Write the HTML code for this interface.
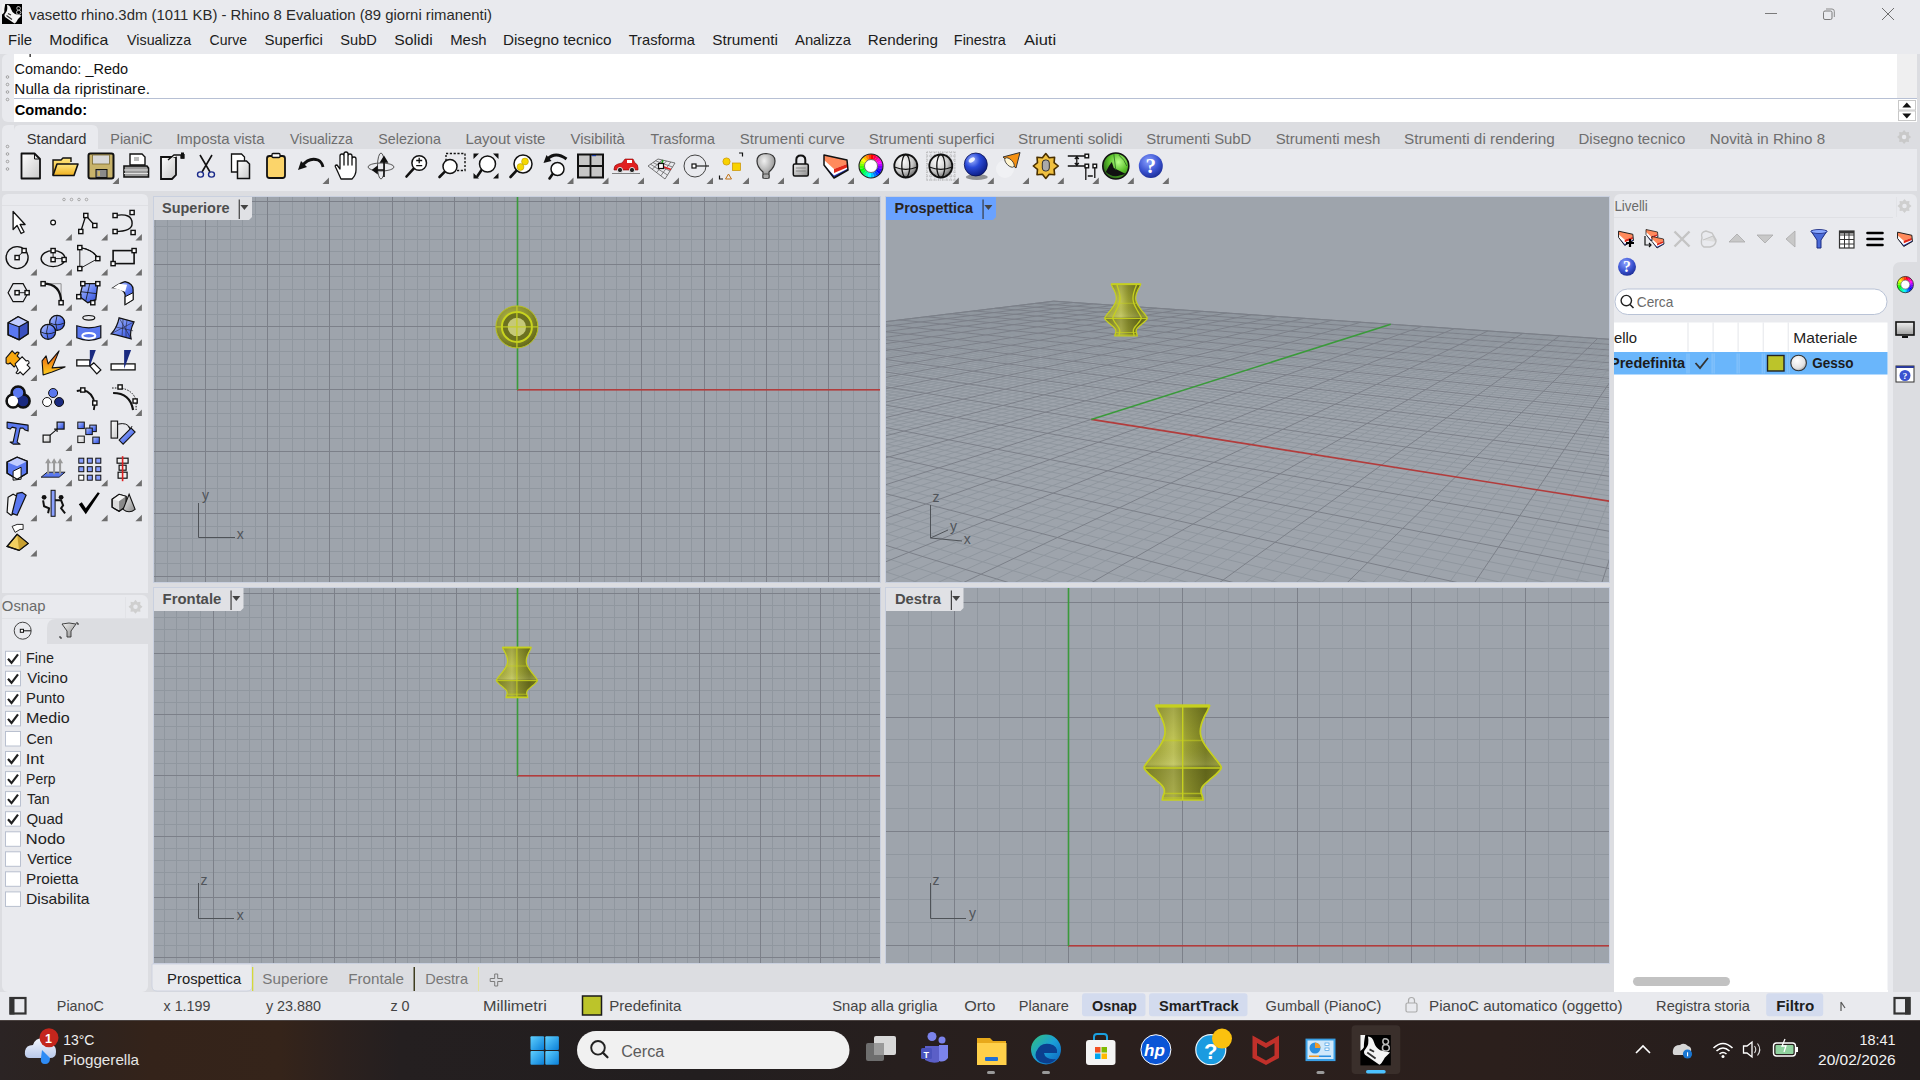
<!DOCTYPE html>
<html><head><meta charset="utf-8"><title>Rhino 8</title>
<style>html,body{margin:0;padding:0;width:1920px;height:1080px;overflow:hidden;background:#dcdde1}
svg{display:block;font-family:"Liberation Sans",sans-serif}</style></head>
<body><svg width="1920" height="1080" viewBox="0 0 1920 1080">
<defs><clipPath id="vp1"><rect x="154" y="197" width="726" height="385"/></clipPath><clipPath id="vp3"><rect x="154" y="588" width="726" height="375"/></clipPath><clipPath id="vp4"><rect x="886" y="588" width="723" height="375"/></clipPath><clipPath id="vp2"><rect x="886" y="197" width="723" height="385"/></clipPath><linearGradient id="vg0" x1="0" x2="1" y1="0" y2="0"><stop offset="0" stop-color="#969b2c"/><stop offset="0.2" stop-color="#aaae3e"/><stop offset="0.38" stop-color="#bfc356"/><stop offset="0.55" stop-color="#9a9f32"/><stop offset="0.8" stop-color="#777c20"/><stop offset="1" stop-color="#8e9328"/></linearGradient><linearGradient id="vg0v" x1="0" x2="0" y1="0" y2="1"><stop offset="0" stop-color="#000" stop-opacity="0.15"/><stop offset="0.35" stop-color="#000" stop-opacity="0"/><stop offset="0.62" stop-color="#fff" stop-opacity="0.12"/><stop offset="0.66" stop-color="#000" stop-opacity="0.2"/><stop offset="1" stop-color="#000" stop-opacity="0.1"/></linearGradient><linearGradient id="vg1" x1="0" x2="1" y1="0" y2="0"><stop offset="0" stop-color="#969b2c"/><stop offset="0.2" stop-color="#aaae3e"/><stop offset="0.38" stop-color="#bfc356"/><stop offset="0.55" stop-color="#9a9f32"/><stop offset="0.8" stop-color="#777c20"/><stop offset="1" stop-color="#8e9328"/></linearGradient><linearGradient id="vg1v" x1="0" x2="0" y1="0" y2="1"><stop offset="0" stop-color="#000" stop-opacity="0.15"/><stop offset="0.35" stop-color="#000" stop-opacity="0"/><stop offset="0.62" stop-color="#fff" stop-opacity="0.12"/><stop offset="0.66" stop-color="#000" stop-opacity="0.2"/><stop offset="1" stop-color="#000" stop-opacity="0.1"/></linearGradient><linearGradient id="vg2" x1="0" x2="1" y1="0" y2="0"><stop offset="0" stop-color="#969b2c"/><stop offset="0.2" stop-color="#aaae3e"/><stop offset="0.38" stop-color="#bfc356"/><stop offset="0.55" stop-color="#9a9f32"/><stop offset="0.8" stop-color="#777c20"/><stop offset="1" stop-color="#8e9328"/></linearGradient><linearGradient id="vg2v" x1="0" x2="0" y1="0" y2="1"><stop offset="0" stop-color="#000" stop-opacity="0.15"/><stop offset="0.35" stop-color="#000" stop-opacity="0"/><stop offset="0.62" stop-color="#fff" stop-opacity="0.12"/><stop offset="0.66" stop-color="#000" stop-opacity="0.2"/><stop offset="1" stop-color="#000" stop-opacity="0.1"/></linearGradient><clipPath id="livclip"><rect x="1614" y="300" width="274" height="100"/></clipPath><linearGradient id="tbg" x1="0" x2="1" y1="0" y2="0"><stop offset="0.0000" stop-color="#2b2424"/><stop offset="0.0312" stop-color="#2c2320"/><stop offset="0.0781" stop-color="#34231a"/><stop offset="0.1458" stop-color="#35241a"/><stop offset="0.1771" stop-color="#2c211e"/><stop offset="0.2083" stop-color="#241f20"/><stop offset="0.3646" stop-color="#221e1f"/><stop offset="0.4688" stop-color="#271f1e"/><stop offset="0.5729" stop-color="#2a1f1d"/><stop offset="0.7812" stop-color="#2b1f1c"/><stop offset="1.0000" stop-color="#231d1d"/></linearGradient><linearGradient id="cloud" x1="0" x2="0" y1="0" y2="1"><stop offset="0" stop-color="#f4f7ff"/><stop offset="1" stop-color="#b9c9ea"/></linearGradient><linearGradient id="win" x1="0" x2="1" y1="0" y2="1"><stop offset="0" stop-color="#5fd0ff"/><stop offset="1" stop-color="#0a7fd8"/></linearGradient><linearGradient id="edg" x1="0" x2="1" y1="0" y2="1"><stop offset="0" stop-color="#33c37a"/><stop offset="0.5" stop-color="#1a9fd8"/><stop offset="1" stop-color="#0c5fbd"/></linearGradient><linearGradient id="gMon" x1="0" x2="0" y1="0" y2="1"><stop offset="0" stop-color="#f0f0f0"/><stop offset="1" stop-color="#a0a0a0"/></linearGradient><linearGradient id="gWhite" x1="0" x2="1" y1="0" y2="1"><stop offset="0" stop-color="#ffffff"/><stop offset="1" stop-color="#c9c9c9"/></linearGradient><linearGradient id="gYellow" x1="0" x2="0" y1="0" y2="1"><stop offset="0" stop-color="#ffe780"/><stop offset="1" stop-color="#f0b020"/></linearGradient><linearGradient id="gBlue" x1="0" x2="1" y1="0" y2="1"><stop offset="0" stop-color="#b9c8ff"/><stop offset="0.6" stop-color="#5a78f0"/><stop offset="1" stop-color="#3048c8"/></linearGradient><linearGradient id="gGray" x1="0" x2="1" y1="0" y2="1"><stop offset="0" stop-color="#f4f4f4"/><stop offset="1" stop-color="#8a8a8a"/></linearGradient><radialGradient id="gSphere" cx="0.35" cy="0.3" r="0.75"><stop offset="0" stop-color="#ffffff"/><stop offset="0.6" stop-color="#c8c8c8"/><stop offset="1" stop-color="#6a6a6a"/></radialGradient><radialGradient id="gBSphere" cx="0.35" cy="0.3" r="0.75"><stop offset="0" stop-color="#9fb4ff"/><stop offset="0.45" stop-color="#2a4ad8"/><stop offset="1" stop-color="#0a1a80"/></radialGradient><radialGradient id="gGSphere" cx="0.6" cy="0.35" r="0.75"><stop offset="0" stop-color="#b8ff8a"/><stop offset="0.5" stop-color="#5ac02a"/><stop offset="1" stop-color="#1a4a10"/></radialGradient><radialGradient id="gHelp" cx="0.4" cy="0.3" r="0.75"><stop offset="0" stop-color="#8aa0ff"/><stop offset="0.6" stop-color="#3a52d0"/><stop offset="1" stop-color="#1a2a90"/></radialGradient><linearGradient id="gOrange" x1="0" x2="0" y1="0" y2="1"><stop offset="0" stop-color="#e85010"/><stop offset="1" stop-color="#ffd020"/></linearGradient><linearGradient id="gWheel" x1="0" x2="1" y1="0" y2="1"><stop offset="0" stop-color="#ff2020"/><stop offset="0.2" stop-color="#ffd000"/><stop offset="0.4" stop-color="#20e020"/><stop offset="0.6" stop-color="#00d0ff"/><stop offset="0.8" stop-color="#3030ff"/><stop offset="1" stop-color="#ff20ff"/></linearGradient><radialGradient id="gBulb" cx="0.4" cy="0.3" r="0.8"><stop offset="0" stop-color="#f0f0f0"/><stop offset="1" stop-color="#7a7a7a"/></radialGradient></defs>
<rect x="0" y="0" width="1920" height="1080" fill="#dcdde1"/>
<rect x="0" y="0" width="1920" height="54" fill="#e9eaee"/>
<rect x="2" y="54" width="1915" height="68" rx="6" fill="#e9eaee"/>
<rect x="14" y="54" width="1883" height="68" fill="#ffffff"/>
<rect x="1897" y="54" width="20" height="45" fill="#efeff0"/>
<rect x="14" y="98" width="1903" height="1" fill="#b7c0d4"/>
<rect x="1897" y="99" width="20" height="23" fill="#ffffff"/>
<rect x="1898.5" y="100.5" width="17" height="9.5" fill="#fff" stroke="#c8c8c8" stroke-width="1"/>
<path d="M1902.3,107.5 L1911.3,107.5 L1906.8,102.5 Z" fill="#111"/>
<rect x="1898.5" y="111" width="17" height="9.5" fill="#fff" stroke="#c8c8c8" stroke-width="1"/>
<path d="M1902.3,113.5 L1911.3,113.5 L1906.8,118.5 Z" fill="#111"/>
<circle cx="7.5" cy="77" r="1.3" fill="none" stroke="#9a9a9a" stroke-width="0.9"/>
<circle cx="7.5" cy="84.5" r="1.3" fill="none" stroke="#9a9a9a" stroke-width="0.9"/>
<circle cx="7.5" cy="92" r="1.3" fill="none" stroke="#9a9a9a" stroke-width="0.9"/>
<circle cx="7.5" cy="99.5" r="1.3" fill="none" stroke="#9a9a9a" stroke-width="0.9"/>
<rect x="29.5" y="54" width="1.3" height="3" fill="#222"/>
<path d="M2,191 V131 Q2,125 8,125 H1917 V191 Z" fill="#e9eaee"/>
<rect x="14" y="125" width="1903" height="24" fill="#dcdde1"/>
<path d="M14,149 L14,131 Q14,125 20,125 L92,125 Q98,125 98,131 L98,149 Z" fill="#e9eaee"/>
<circle cx="7.5" cy="146.5" r="1.3" fill="none" stroke="#9a9a9a" stroke-width="0.9"/>
<circle cx="7.5" cy="154" r="1.3" fill="none" stroke="#9a9a9a" stroke-width="0.9"/>
<circle cx="7.5" cy="161.5" r="1.3" fill="none" stroke="#9a9a9a" stroke-width="0.9"/>
<circle cx="7.5" cy="169" r="1.3" fill="none" stroke="#9a9a9a" stroke-width="0.9"/>
<text x="29.00" y="20.30" font-size="14.5" fill="#2a2a2a" textLength="462.99" lengthAdjust="spacingAndGlyphs">vasetto rhino.3dm (1011 KB) - Rhino 8 Evaluation (89 giorni rimanenti)</text>
<rect x="1765" y="13" width="12" height="1" fill="#7a7a7a"/>
<rect x="1823.5" y="11" width="8.5" height="8.5" rx="1.5" fill="none" stroke="#7a7a7a" stroke-width="1"/>
<path d="M1826,9 H1832 Q1834.3,9 1834.3,11.3 V17" fill="none" stroke="#8a8a8a" stroke-width="1"/>
<path d="M1882,8 L1894,20 M1894,8 L1882,20" stroke="#6e6e6e" stroke-width="1"/>
<text x="8.11" y="44.70" font-size="14.5" fill="#1c1c1c" textLength="24.01" lengthAdjust="spacingAndGlyphs">File</text>
<text x="49.34" y="44.70" font-size="14.5" fill="#1c1c1c" textLength="58.86" lengthAdjust="spacingAndGlyphs">Modifica</text>
<text x="127.10" y="44.70" font-size="14.5" fill="#1c1c1c" textLength="64.01" lengthAdjust="spacingAndGlyphs">Visualizza</text>
<text x="209.60" y="44.70" font-size="14.5" fill="#1c1c1c" textLength="37.36" lengthAdjust="spacingAndGlyphs">Curve</text>
<text x="264.45" y="44.70" font-size="14.5" fill="#1c1c1c" textLength="58.46" lengthAdjust="spacingAndGlyphs">Superfici</text>
<text x="340.37" y="44.70" font-size="14.5" fill="#1c1c1c" textLength="36.54" lengthAdjust="spacingAndGlyphs">SubD</text>
<text x="394.31" y="44.70" font-size="14.5" fill="#1c1c1c" textLength="38.42" lengthAdjust="spacingAndGlyphs">Solidi</text>
<text x="450.21" y="44.70" font-size="14.5" fill="#1c1c1c" textLength="36.46" lengthAdjust="spacingAndGlyphs">Mesh</text>
<text x="502.98" y="44.70" font-size="14.5" fill="#1c1c1c" textLength="108.55" lengthAdjust="spacingAndGlyphs">Disegno tecnico</text>
<text x="628.71" y="44.70" font-size="14.5" fill="#1c1c1c" textLength="66.28" lengthAdjust="spacingAndGlyphs">Trasforma</text>
<text x="712.23" y="44.70" font-size="14.5" fill="#1c1c1c" textLength="65.67" lengthAdjust="spacingAndGlyphs">Strumenti</text>
<text x="795.00" y="44.70" font-size="14.5" fill="#1c1c1c" textLength="56.00" lengthAdjust="spacingAndGlyphs">Analizza</text>
<text x="867.78" y="44.70" font-size="14.5" fill="#1c1c1c" textLength="70.19" lengthAdjust="spacingAndGlyphs">Rendering</text>
<text x="953.85" y="44.70" font-size="14.5" fill="#1c1c1c" textLength="52.04" lengthAdjust="spacingAndGlyphs">Finestra</text>
<text x="1024.00" y="44.70" font-size="14.5" fill="#1c1c1c" textLength="32.08" lengthAdjust="spacingAndGlyphs">Aiuti</text>
<text x="14.58" y="73.80" font-size="14.5" fill="#111" textLength="113.47" lengthAdjust="spacingAndGlyphs">Comando: _Redo</text>
<text x="14.38" y="93.50" font-size="14.5" fill="#111" textLength="135.52" lengthAdjust="spacingAndGlyphs">Nulla da ripristinare.</text>
<text x="14.71" y="114.60" font-size="14.5" fill="#000" font-weight="bold" textLength="72.36" lengthAdjust="spacingAndGlyphs">Comando:</text>
<text x="26.76" y="143.70" font-size="14.5" fill="#333" textLength="59.74" lengthAdjust="spacingAndGlyphs">Standard</text>
<text x="110.35" y="143.70" font-size="14.5" fill="#6e6e6e" textLength="42.31" lengthAdjust="spacingAndGlyphs">PianiC</text>
<text x="176.15" y="143.70" font-size="14.5" fill="#6e6e6e" textLength="88.36" lengthAdjust="spacingAndGlyphs">Imposta vista</text>
<text x="290.00" y="143.70" font-size="14.5" fill="#6e6e6e" textLength="62.91" lengthAdjust="spacingAndGlyphs">Visualizza</text>
<text x="378.29" y="143.70" font-size="14.5" fill="#6e6e6e" textLength="62.60" lengthAdjust="spacingAndGlyphs">Seleziona</text>
<text x="465.40" y="143.70" font-size="14.5" fill="#6e6e6e" textLength="80.09" lengthAdjust="spacingAndGlyphs">Layout viste</text>
<text x="570.50" y="143.70" font-size="14.5" fill="#6e6e6e" textLength="54.40" lengthAdjust="spacingAndGlyphs">Visibilità</text>
<text x="650.62" y="143.70" font-size="14.5" fill="#6e6e6e" textLength="64.27" lengthAdjust="spacingAndGlyphs">Trasforma</text>
<text x="739.85" y="143.70" font-size="14.5" fill="#6e6e6e" textLength="104.98" lengthAdjust="spacingAndGlyphs">Strumenti curve</text>
<text x="868.84" y="143.70" font-size="14.5" fill="#6e6e6e" textLength="125.57" lengthAdjust="spacingAndGlyphs">Strumenti superfici</text>
<text x="1017.94" y="143.70" font-size="14.5" fill="#6e6e6e" textLength="104.57" lengthAdjust="spacingAndGlyphs">Strumenti solidi</text>
<text x="1146.36" y="143.70" font-size="14.5" fill="#6e6e6e" textLength="105.01" lengthAdjust="spacingAndGlyphs">Strumenti SubD</text>
<text x="1275.65" y="143.70" font-size="14.5" fill="#6e6e6e" textLength="104.78" lengthAdjust="spacingAndGlyphs">Strumenti mesh</text>
<text x="1404.03" y="143.70" font-size="14.5" fill="#6e6e6e" textLength="150.80" lengthAdjust="spacingAndGlyphs">Strumenti di rendering</text>
<text x="1578.50" y="143.70" font-size="14.5" fill="#6e6e6e" textLength="106.72" lengthAdjust="spacingAndGlyphs">Disegno tecnico</text>
<text x="1709.79" y="143.70" font-size="14.5" fill="#6e6e6e" textLength="115.29" lengthAdjust="spacingAndGlyphs">Novità in Rhino 8</text>
<rect x="153" y="196" width="728" height="387" fill="#c9d0df"/>
<g clip-path="url(#vp1)">
<rect x="154" y="197" width="726" height="385" fill="#9ea4ac"/>
<path d="M155.5,197V582M167.5,197V582M180.5,197V582M192.5,197V582M217.5,197V582M230.5,197V582M242.5,197V582M255.5,197V582M279.5,197V582M292.5,197V582M304.5,197V582M317.5,197V582M342.5,197V582M154,214.5H880M354.5,197V582M154,226.5H880M367.5,197V582M154,239.5H880M379.5,197V582M154,251.5H880M404.5,197V582M154,276.5H880M417.5,197V582M154,289.5H880M429.5,197V582M154,301.5H880M442.5,197V582M154,314.5H880M467.5,197V582M154,339.5H880M479.5,197V582M154,351.5H880M492.5,197V582M154,364.5H880M504.5,197V582M154,376.5H880M529.5,197V582M154,401.5H880M541.5,197V582M154,413.5H880M554.5,197V582M154,426.5H880M566.5,197V582M154,438.5H880M591.5,197V582M154,463.5H880M604.5,197V582M154,476.5H880M616.5,197V582M154,488.5H880M629.5,197V582M154,501.5H880M654.5,197V582M154,526.5H880M666.5,197V582M154,538.5H880M679.5,197V582M154,551.5H880M691.5,197V582M154,563.5H880M716.5,197V582M729.5,197V582M741.5,197V582M754.5,197V582M778.5,197V582M791.5,197V582M803.5,197V582M816.5,197V582M841.5,197V582M853.5,197V582M866.5,197V582M878.5,197V582" stroke="#90979f" stroke-width="1" fill="none"/>
<path d="M205.5,197V582M267.5,197V582M329.5,197V582M154,201.5H880M392.5,197V582M154,264.5H880M454.5,197V582M154,326.5H880M579.5,197V582M154,451.5H880M641.5,197V582M154,513.5H880M704.5,197V582M154,576.5H880M766.5,197V582M828.5,197V582" stroke="#7c8089" stroke-width="1" fill="none"/>
<path d="M154,389.5H517M517.5,389V582" stroke="#7c8089" stroke-width="1"/>
<rect x="517" y="389" width="363" height="1.6" fill="#b23c3c"/>
<rect x="516.7" y="197" width="1.6" height="193" fill="#3a9a3a"/>
</g>
<rect x="153" y="587" width="728" height="377" fill="#c9d0df"/>
<g clip-path="url(#vp3)">
<rect x="154" y="588" width="726" height="375" fill="#9ea4ac"/>
<path d="M164.5,588V963M176.5,588V963M188.5,588V963M200.5,588V963M225.5,588V963M237.5,588V963M249.5,588V963M261.5,588V963M286.5,588V963M298.5,588V963M310.5,588V963M322.5,588V963M346.5,588V963M154,605.5H880M358.5,588V963M154,617.5H880M371.5,588V963M154,629.5H880M383.5,588V963M154,641.5H880M407.5,588V963M154,666.5H880M419.5,588V963M154,678.5H880M431.5,588V963M154,690.5H880M444.5,588V963M154,702.5H880M468.5,588V963M154,726.5H880M480.5,588V963M154,739.5H880M492.5,588V963M154,751.5H880M504.5,588V963M154,763.5H880M529.5,588V963M154,787.5H880M541.5,588V963M154,799.5H880M553.5,588V963M154,811.5H880M565.5,588V963M154,824.5H880M589.5,588V963M154,848.5H880M602.5,588V963M154,860.5H880M614.5,588V963M154,872.5H880M626.5,588V963M154,884.5H880M650.5,588V963M154,909.5H880M662.5,588V963M154,921.5H880M675.5,588V963M154,933.5H880M687.5,588V963M154,945.5H880M711.5,588V963M723.5,588V963M735.5,588V963M747.5,588V963M772.5,588V963M784.5,588V963M796.5,588V963M808.5,588V963M833.5,588V963M845.5,588V963M857.5,588V963M869.5,588V963" stroke="#90979f" stroke-width="1" fill="none"/>
<path d="M213.5,588V963M273.5,588V963M334.5,588V963M154,593.5H880M395.5,588V963M154,653.5H880M456.5,588V963M154,714.5H880M577.5,588V963M154,836.5H880M638.5,588V963M154,897.5H880M699.5,588V963M154,957.5H880M760.5,588V963M820.5,588V963" stroke="#7c8089" stroke-width="1" fill="none"/>
<path d="M154,775.5H517M517.5,775V963" stroke="#7c8089" stroke-width="1"/>
<rect x="517" y="775" width="363" height="1.6" fill="#b23c3c"/>
<rect x="516.7" y="588" width="1.6" height="188" fill="#3a9a3a"/>
</g>
<rect x="885" y="587" width="725" height="377" fill="#c9d0df"/>
<g clip-path="url(#vp4)">
<rect x="886" y="588" width="723" height="375" fill="#9ea4ac"/>
<path d="M886,625.5H1609M886,648.5H1609M886,671.5H1609M886,694.5H1609M886,739.5H1609M886,762.5H1609M908.5,588V963M886,785.5H1609M931.5,588V963M886,808.5H1609M977.5,588V963M886,854.5H1609M999.5,588V963M886,877.5H1609M1022.5,588V963M886,899.5H1609M1045.5,588V963M886,922.5H1609M1091.5,588V963M1114.5,588V963M1137.5,588V963M1159.5,588V963M1205.5,588V963M1228.5,588V963M1251.5,588V963M1274.5,588V963M1319.5,588V963M1342.5,588V963M1365.5,588V963M1388.5,588V963M1434.5,588V963M1457.5,588V963M1479.5,588V963M1502.5,588V963M1548.5,588V963M1571.5,588V963M1594.5,588V963" stroke="#90979f" stroke-width="1" fill="none"/>
<path d="M886,602.5H1609M886,717.5H1609M954.5,588V963M886,831.5H1609M1182.5,588V963M1297.5,588V963M1411.5,588V963M1525.5,588V963" stroke="#7c8089" stroke-width="1" fill="none"/>
<path d="M886,945.5H1068M1068.5,945V963" stroke="#7c8089" stroke-width="1"/>
<rect x="1068" y="945" width="541" height="1.6" fill="#b23c3c"/>
<rect x="1067.7" y="588" width="1.6" height="358" fill="#3a9a3a"/>
</g>
<rect x="885" y="196" width="725" height="387" fill="#c9d0df"/>
<g clip-path="url(#vp2)">
<rect x="886" y="197" width="723" height="385" fill="#9ea4ac"/>
<path d="M-978.64,552.10L1057.57,301.42M-912.07,541.02L-3816.03,1881.17M-988.30,556.31L1061.40,301.68M-857.32,534.33L-3607.11,1881.73M-998.21,560.63L1065.25,301.94M-804.79,527.93L-3398.20,1882.29M-1008.37,565.06L1069.13,302.21M-754.36,521.77L-3189.29,1882.85M-1029.49,574.28L1076.96,302.75M-659.32,510.18L-2771.46,1883.97M-1040.47,579.07L1080.92,303.02M-614.49,504.71L-2562.55,1884.53M-1051.75,583.99L1084.89,303.29M-571.31,499.44L-2353.64,1885.09M-1063.34,589.04L1088.89,303.56M-529.71,494.36L-2144.72,1885.66M-1087.50,599.57L1096.97,304.12M-450.87,484.74L-1726.90,1886.78M-1100.10,605.07L1101.04,304.40M-413.49,480.18L-1517.99,1887.34M-1113.06,610.72L1105.15,304.68M-377.38,475.77L-1309.07,1887.90M-1126.40,616.54L1109.27,304.96M-342.46,471.51L-1100.16,1888.46M-1154.30,628.70L1117.61,305.53M-276.01,463.41L-682.34,1889.58M-1168.89,635.07L1121.81,305.82M-244.37,459.55L-473.42,1890.14M-1183.93,641.63L1126.05,306.11M-213.72,455.81L-264.51,1890.70M-1199.46,648.40L1130.31,306.41M-184.00,452.18L-55.60,1891.27M-1232.03,662.60L1138.91,307.00M-127.23,445.25L362.23,1892.39M-1249.13,670.06L1143.25,307.29M-100.10,441.94L571.14,1892.95M-1266.81,677.77L1147.62,307.59M-73.76,438.73L780.05,1893.51M-1285.10,685.75L1152.02,307.90M-48.16,435.61L988.97,1894.07M-1323.64,702.55L1160.91,308.51M0.90,429.62L1406.79,1895.19M-1343.95,711.41L1165.40,308.81M24.42,426.75L1615.70,1895.75M-1365.02,720.60L1169.91,309.12M47.30,423.96L1824.62,1896.32M-1386.89,730.14L1174.46,309.43M69.58,421.24L2033.53,1896.88M-1433.19,750.33L1183.64,310.06M112.40,416.01L2451.36,1898.00M-1457.72,761.03L1188.28,310.38M132.98,413.50L2660.27,1898.56M-1483.26,772.17L1192.95,310.70M153.05,411.05L2869.18,1899.12M-1509.86,783.77L1197.65,311.03M172.61,408.67L3078.09,1899.68M-1566.53,808.48L1207.14,311.68M210.31,404.07L3495.92,1900.80M-1596.75,821.66L1211.94,312.01M228.48,401.85L3704.83,1901.36M-1628.34,835.44L1216.77,312.34M246.22,399.69L3913.74,1901.93M-1661.40,849.85L1221.63,312.67M263.53,397.57L4122.66,1902.49M-1732.35,880.80L1231.46,313.34M296.98,393.49L4540.48,1903.61M-1770.49,897.43L1236.42,313.69M313.13,391.52L4613.29,1857.76M-1810.57,914.91L1241.42,314.03M328.92,389.60L4336.92,1701.36M-1852.77,933.31L1246.45,314.37M344.36,387.71L4108.73,1572.22M-1944.18,973.18L1256.62,315.07M374.23,384.07L3753.98,1371.47M-1993.80,994.81L1261.76,315.42M388.68,382.30L3613.38,1291.90M-2046.33,1017.72L1266.93,315.78M402.83,380.58L3490.95,1222.61M-2102.04,1042.02L1272.14,316.14M416.68,378.89L3383.39,1161.74M-2224.23,1095.31L1282.68,316.86M443.52,375.61L3203.20,1059.77M-2291.43,1124.61L1288.00,317.22M456.53,374.03L3126.99,1016.64M-2363.25,1155.93L1293.36,317.59M469.28,372.47L3058.22,977.72M-2440.19,1189.49L1298.76,317.96M481.77,370.95L2995.86,942.43M-2611.80,1264.33L1309.68,318.71M506.02,367.99L2887.08,880.87M-2707.88,1306.23L1315.20,319.09M517.79,366.55L2839.35,853.86M-2811.96,1351.62L1320.76,319.47M529.34,365.14L2795.38,828.98M-2925.06,1400.94L1326.36,319.86M540.67,363.76L2754.72,805.97M-3183.51,1513.65L1337.69,320.63M562.68,361.07L2681.98,764.81M-3332.07,1578.44L1343.41,321.02M573.39,359.77L2649.31,746.32M-3496.24,1650.04L1349.18,321.42M583.89,358.48L2618.79,729.05M-3678.59,1729.56L1354.99,321.82M594.21,357.23L2590.21,712.87M-3982.31,1880.72L1366.75,322.63M614.29,354.78L2538.16,683.42M-3865.04,1881.04L1372.69,323.03M624.06,353.58L2514.41,669.97M-3747.78,1881.35L1378.68,323.44M633.67,352.41L2491.99,657.29M-3630.52,1881.67L1384.71,323.86M643.10,351.26L2470.80,645.30M-3396.00,1882.30L1396.92,324.70M661.49,349.02L2431.73,623.18M-3278.74,1882.61L1403.10,325.12M670.45,347.92L2413.68,612.97M-3161.48,1882.92L1409.32,325.55M679.26,346.85L2396.52,603.26M-3044.21,1883.24L1415.59,325.98M687.92,345.79L2380.18,594.01M-2809.69,1883.87L1428.28,326.85M704.82,343.73L2349.77,576.81M-2692.43,1884.18L1434.70,327.29M713.06,342.72L2335.60,568.78M-2575.17,1884.50L1441.17,327.73M721.17,341.73L2322.04,561.11M-2457.91,1884.81L1447.69,328.18M729.15,340.76L2309.07,553.77M-2223.38,1885.44L1460.89,329.08M744.74,338.86L2284.73,540.00M-2106.12,1885.76L1467.56,329.54M752.35,337.93L2273.30,533.53M-1988.86,1886.07L1474.30,330.00M759.84,337.02L2262.32,527.31M-1871.60,1886.39L1481.08,330.47M767.22,336.12L2251.77,521.34M-1637.08,1887.02L1494.82,331.41M781.64,334.36L2231.85,510.07M-1519.82,1887.33L1501.78,331.89M788.68,333.50L2222.44,504.74M-1402.55,1887.65L1508.79,332.37M795.62,332.65L2213.37,499.61M-1285.29,1887.96L1515.86,332.85M802.46,331.82L2204.62,494.66M-1050.77,1888.59L1530.17,333.84M815.84,330.18L2188.01,485.26M-933.51,1888.91L1537.42,334.33M822.38,329.39L2180.13,480.80M-816.25,1889.22L1544.72,334.83M828.83,328.60L2172.51,476.49M-698.99,1889.54L1552.09,335.34M835.19,327.82L2165.13,472.31M-464.46,1890.17L1567.02,336.36M847.64,326.30L2151.08,464.36M-347.20,1890.48L1574.58,336.88M853.73,325.56L2144.38,460.57M-229.94,1890.80L1582.20,337.41M859.74,324.83L2137.89,456.90M-112.68,1891.11L1589.89,337.93M865.66,324.10L2131.59,453.33M121.84,1891.74L1605.47,339.00M877.27,322.69L2119.55,446.52M239.11,1892.06L1613.36,339.54M882.96,321.99L2113.78,443.25M356.37,1892.37L1621.32,340.09M888.57,321.31L2108.18,440.09M473.63,1892.69L1629.34,340.64M894.10,320.63L2102.74,437.01M708.15,1893.32L1645.62,341.76M904.96,319.31L2092.30,431.10M825.41,1893.63L1653.86,342.32M910.28,318.66L2087.29,428.26M942.67,1893.95L1662.18,342.89M915.53,318.02L2082.41,425.50M1059.94,1894.26L1670.58,343.47M920.71,317.39L2077.66,422.81M1294.46,1894.89L1687.59,344.64M930.88,316.15L2068.53,417.64M1411.72,1895.21L1696.22,345.23M935.87,315.54L2064.13,415.16M1528.98,1895.52L1704.92,345.82M940.79,314.94L2059.85,412.73M1646.24,1895.84L1713.70,346.43M945.66,314.34L2055.67,410.37M1880.77,1896.47L1731.51,347.65M955.20,313.18L2047.60,405.80M1998.03,1896.78L1740.54,348.27M959.89,312.61L2043.72,403.60M2115.29,1897.10L1749.66,348.89M964.52,312.04L2039.92,401.45M2232.55,1897.41L1758.86,349.52M969.09,311.49L2036.21,399.36M2467.07,1898.04L1777.52,350.80M978.07,310.39L2029.05,395.30M2584.33,1898.36L1786.99,351.45M982.48,309.85L2025.58,393.34M2701.60,1898.67L1796.54,352.11M986.84,309.32L2022.20,391.42M2818.86,1898.99L1806.19,352.77M991.15,308.79L2018.88,389.55M3053.38,1899.62L1825.77,354.11M999.61,307.76L2012.47,385.92M3170.64,1899.93L1835.70,354.80M1003.77,307.25L2009.37,384.16M3287.90,1900.24L1845.73,355.48M1007.88,306.75L2006.33,382.44M3405.16,1900.56L1855.86,356.18M1011.94,306.26L2003.35,380.76M3639.69,1901.19L1876.42,357.59M1019.93,305.28L1997.58,377.49M3756.95,1901.50L1886.86,358.31M1023.86,304.80L1994.78,375.91M3874.21,1901.82L1897.40,359.03M1027.74,304.33L1992.04,374.36M3991.47,1902.13L1908.05,359.76M1031.58,303.86L1989.35,372.84M4225.99,1902.76L1929.67,361.24M1039.14,302.94L1984.13,369.88M4343.26,1903.08L1940.65,362.00M1042.85,302.49L1981.59,368.45M4460.52,1903.39L1951.74,362.76M1046.53,302.04L1979.11,367.04M4577.78,1903.71L1962.95,363.52M1050.16,301.59L1976.66,365.66" stroke="#90979f" stroke-width="1" fill="none"/>
<path d="M-969.21,547.99L1053.76,301.15M-969.21,547.99L-4024.94,1880.61M-1018.79,569.61L1073.04,302.48M-705.91,515.86L-2980.37,1883.41M-1075.25,594.23L1092.92,303.84M-489.59,489.47L-1935.81,1886.22M-1140.14,622.53L1113.43,305.25M-308.70,467.39L-891.25,1889.02M-1215.48,655.39L1134.59,306.70M-155.19,448.66L153.32,1891.83M-1304.03,694.00L1156.45,308.20M-23.29,432.57L1197.88,1894.63M-1409.59,740.04L1179.04,309.75M91.27,418.59L2242.44,1897.44M-1537.59,795.86L1202.38,311.35M191.70,406.34L3287.01,1900.24M-1696.03,864.96L1226.53,313.01M280.45,395.51L4331.57,1903.05M-1897.24,952.71L1251.52,314.72M359.46,385.87L3917.13,1463.80M-2161.23,1067.83L1277.39,316.50M430.24,377.23L3288.14,1107.84M-2522.82,1225.53L1304.20,318.34M494.02,369.45L2939.05,910.28M-3048.42,1454.74L1332.00,320.24M551.78,362.40L2717.03,784.64M-3882.34,1818.42L1360.85,322.22M604.34,355.99L2563.38,697.69M-2926.95,1883.55L1421.91,326.41M696.44,344.75L2364.62,585.21M-2340.65,1885.13L1454.26,328.63M737.01,339.80L2296.64,546.74M-1754.34,1886.70L1487.92,330.94M774.48,335.23L2241.62,515.60M-1168.03,1888.28L1522.98,333.34M809.20,330.99L2196.17,489.88M-581.72,1889.85L1559.52,335.85M841.46,327.06L2158.00,468.28M4.58,1891.43L1597.64,338.47M871.51,323.39L2125.48,449.87M590.89,1893.00L1637.45,341.20M899.57,319.97L2097.45,434.01M1177.20,1894.58L1679.05,344.05M925.83,316.76L2073.04,420.20M1763.50,1896.15L1722.57,347.03M950.46,313.76L2051.59,408.06M2349.81,1897.73L1768.15,350.16M973.61,310.93L2032.59,397.30M2936.12,1899.30L1815.93,353.44M995.40,308.27L2015.64,387.72M3522.43,1900.87L1866.09,356.88M1015.96,305.77L2000.44,379.11M4108.73,1902.45L1918.80,360.50M1035.38,303.40L1986.71,371.34M4695.04,1904.02L1974.27,364.30M1053.76,301.15L1974.27,364.30M-969.21,547.99L1053.76,301.15M1053.76,301.15L1974.27,364.30M4695.04,1904.02L1974.27,364.30M-969.21,547.99L-4024.94,1880.61M652.37,350.13L1091.31,419.40M-3513.26,1881.98L1091.31,419.40" stroke="#7c8089" stroke-width="1" fill="none"/>
<path d="M1091.31,419.40L2450.74,633.94" stroke="#b23c3c" stroke-width="1.6" fill="none"/>
<path d="M1091.31,419.40L1390.79,324.28" stroke="#3a9a3a" stroke-width="1.6" fill="none"/>
</g>
<path d="M154,197 H252 V217 L249,220 H154 Z" fill="#e0e1e5"/>
<text x="162.07" y="212.80" font-size="14.5" fill="#4d4d4d" font-weight="bold" textLength="67.48" lengthAdjust="spacingAndGlyphs">Superiore</text>
<rect x="238.7" y="199.5" width="1.1" height="19.5" fill="#333"/>
<path d="M240.4,205 H248.4 L244.4,210 Z" fill="#444"/>
<path d="M886,197 H996 V217 L993,220 H886 Z" fill="#6aa2ff"/>
<text x="894.59" y="212.80" font-size="14.5" fill="#2a241e" font-weight="bold" textLength="78.45" lengthAdjust="spacingAndGlyphs">Prospettica</text>
<rect x="982.5" y="199.5" width="1.1" height="19.5" fill="#333"/>
<path d="M984.4,205 H992.4 L988.4,210 Z" fill="#444"/>
<path d="M154,588 H243.5 V608 L240.5,611 H154 Z" fill="#e0e1e5"/>
<text x="162.56" y="603.80" font-size="14.5" fill="#4d4d4d" font-weight="bold" textLength="58.76" lengthAdjust="spacingAndGlyphs">Frontale</text>
<rect x="230.5" y="590.5" width="1.1" height="19.5" fill="#333"/>
<path d="M232.3,596 H240.3 L236.3,601 Z" fill="#444"/>
<path d="M886,588 H963.5 V608 L960.5,611 H886 Z" fill="#e0e1e5"/>
<text x="894.97" y="603.80" font-size="14.5" fill="#4d4d4d" font-weight="bold" textLength="45.92" lengthAdjust="spacingAndGlyphs">Destra</text>
<rect x="950.8" y="590.5" width="1.1" height="19.5" fill="#333"/>
<path d="M952.2,596 H960.2 L956.2,601 Z" fill="#444"/>
<text x="202.00" y="500.00" font-size="14" fill="#50545a">y</text>
<text x="236.86" y="539.00" font-size="14" fill="#50545a">x</text>
<path d="M198.5,503 V537.5 H235" stroke="#4f5358" stroke-width="1" fill="none"/>
<text x="200.44" y="885.00" font-size="14" fill="#50545a">z</text>
<text x="236.86" y="920.00" font-size="14" fill="#50545a">x</text>
<path d="M198.5,883 V918.5 H234" stroke="#4f5358" stroke-width="1" fill="none"/>
<text x="932.44" y="885.00" font-size="14" fill="#50545a">z</text>
<text x="969.00" y="918.00" font-size="14" fill="#50545a">y</text>
<path d="M930.5,883 V918.5 H966" stroke="#4f5358" stroke-width="1" fill="none"/>
<path d="M930.5,505 V538 L948,530 M930.5,538 L962,541" stroke="#4f5358" stroke-width="1" fill="none"/>
<text x="932.44" y="502.00" font-size="14" fill="#50545a">z</text>
<text x="950.00" y="531.00" font-size="14" fill="#50545a">y</text>
<text x="963.86" y="544.00" font-size="14" fill="#50545a">x</text>
<path d="M1155.80,705.60 C1156.15,706.43 1156.95,708.60 1157.90,710.60 C1158.85,712.60 1160.47,715.27 1161.50,717.60 C1162.53,719.93 1163.50,722.33 1164.10,724.60 C1164.70,726.87 1165.05,729.20 1165.10,731.20 C1165.15,733.20 1164.93,734.70 1164.40,736.60 C1163.87,738.50 1163.22,740.27 1161.90,742.60 C1160.58,744.93 1158.47,747.93 1156.50,750.60 C1154.53,753.27 1151.87,756.35 1150.10,758.60 C1148.33,760.85 1146.90,762.63 1145.90,764.10 C1144.90,765.57 1144.20,766.40 1144.10,767.40 C1144.00,768.40 1144.37,768.90 1145.30,770.10 C1146.23,771.30 1147.80,772.85 1149.70,774.60 C1151.60,776.35 1154.63,778.77 1156.70,780.60 C1158.77,782.43 1160.87,784.18 1162.10,785.60 C1163.33,787.02 1163.73,787.93 1164.10,789.10 C1164.47,790.27 1164.47,791.43 1164.30,792.60 C1164.13,793.77 1163.45,794.87 1163.10,796.10 C1162.75,797.33 1162.35,799.35 1162.20,800.00 L1203.20,800.00 C1203.05,799.35 1202.65,797.33 1202.30,796.10 C1201.95,794.87 1201.27,793.77 1201.10,792.60 C1200.93,791.43 1200.93,790.27 1201.30,789.10 C1201.67,787.93 1202.07,787.02 1203.30,785.60 C1204.53,784.18 1206.63,782.43 1208.70,780.60 C1210.77,778.77 1213.80,776.35 1215.70,774.60 C1217.60,772.85 1219.17,771.30 1220.10,770.10 C1221.03,768.90 1221.40,768.40 1221.30,767.40 C1221.20,766.40 1220.50,765.57 1219.50,764.10 C1218.50,762.63 1217.07,760.85 1215.30,758.60 C1213.53,756.35 1210.87,753.27 1208.90,750.60 C1206.93,747.93 1204.82,744.93 1203.50,742.60 C1202.18,740.27 1201.53,738.50 1201.00,736.60 C1200.47,734.70 1200.25,733.20 1200.30,731.20 C1200.35,729.20 1200.70,726.87 1201.30,724.60 C1201.90,722.33 1202.87,719.93 1203.90,717.60 C1204.93,715.27 1206.55,712.60 1207.50,710.60 C1208.45,708.60 1209.25,706.43 1209.60,705.60 Z" fill="url(#vg0)"/>
<path d="M1155.80,705.60 C1156.15,706.43 1156.95,708.60 1157.90,710.60 C1158.85,712.60 1160.47,715.27 1161.50,717.60 C1162.53,719.93 1163.50,722.33 1164.10,724.60 C1164.70,726.87 1165.05,729.20 1165.10,731.20 C1165.15,733.20 1164.93,734.70 1164.40,736.60 C1163.87,738.50 1163.22,740.27 1161.90,742.60 C1160.58,744.93 1158.47,747.93 1156.50,750.60 C1154.53,753.27 1151.87,756.35 1150.10,758.60 C1148.33,760.85 1146.90,762.63 1145.90,764.10 C1144.90,765.57 1144.20,766.40 1144.10,767.40 C1144.00,768.40 1144.37,768.90 1145.30,770.10 C1146.23,771.30 1147.80,772.85 1149.70,774.60 C1151.60,776.35 1154.63,778.77 1156.70,780.60 C1158.77,782.43 1160.87,784.18 1162.10,785.60 C1163.33,787.02 1163.73,787.93 1164.10,789.10 C1164.47,790.27 1164.47,791.43 1164.30,792.60 C1164.13,793.77 1163.45,794.87 1163.10,796.10 C1162.75,797.33 1162.35,799.35 1162.20,800.00 L1203.20,800.00 C1203.05,799.35 1202.65,797.33 1202.30,796.10 C1201.95,794.87 1201.27,793.77 1201.10,792.60 C1200.93,791.43 1200.93,790.27 1201.30,789.10 C1201.67,787.93 1202.07,787.02 1203.30,785.60 C1204.53,784.18 1206.63,782.43 1208.70,780.60 C1210.77,778.77 1213.80,776.35 1215.70,774.60 C1217.60,772.85 1219.17,771.30 1220.10,770.10 C1221.03,768.90 1221.40,768.40 1221.30,767.40 C1221.20,766.40 1220.50,765.57 1219.50,764.10 C1218.50,762.63 1217.07,760.85 1215.30,758.60 C1213.53,756.35 1210.87,753.27 1208.90,750.60 C1206.93,747.93 1204.82,744.93 1203.50,742.60 C1202.18,740.27 1201.53,738.50 1201.00,736.60 C1200.47,734.70 1200.25,733.20 1200.30,731.20 C1200.35,729.20 1200.70,726.87 1201.30,724.60 C1201.90,722.33 1202.87,719.93 1203.90,717.60 C1204.93,715.27 1206.55,712.60 1207.50,710.60 C1208.45,708.60 1209.25,706.43 1209.60,705.60 Z" fill="url(#vg0v)" stroke="#c6d01e" stroke-width="1.70" stroke-linejoin="round"/>
<rect x="1155.80" y="704.40" width="53.80" height="3.20" fill="#c6d01e"/>
<path d="M1162.73,740.60 H1202.67" stroke="#c6d01e" stroke-width="1.50" opacity="0.55"/>
<path d="M1144.41,768.10 H1220.99" stroke="#c6d01e" stroke-width="1.50" opacity="1"/>
<path d="M1163.96,793.60 H1201.44" stroke="#c6d01e" stroke-width="1.50" opacity="0.7"/>
<path d="M1162.64,798.10 H1202.76" stroke="#c6d01e" stroke-width="1.50" opacity="0.6"/>
<path d="M1182.70,705.60 V800.00" stroke="#c6d01e" stroke-width="1.40"/>
<path d="M502.59,647.40 C502.78,647.84 503.20,649.00 503.71,650.06 C504.21,651.12 505.07,652.54 505.62,653.78 C506.17,655.03 506.69,656.30 507.00,657.51 C507.32,658.71 507.51,659.96 507.54,661.02 C507.56,662.08 507.45,662.88 507.16,663.89 C506.88,664.90 506.53,665.84 505.83,667.08 C505.13,668.33 504.01,669.92 502.96,671.34 C501.92,672.76 500.50,674.40 499.56,675.60 C498.62,676.79 497.85,677.74 497.32,678.52 C496.79,679.30 496.42,679.75 496.36,680.28 C496.31,680.81 496.51,681.08 497.00,681.71 C497.50,682.35 498.33,683.18 499.34,684.11 C500.35,685.04 501.97,686.32 503.07,687.30 C504.17,688.28 505.28,689.21 505.94,689.96 C506.60,690.71 506.81,691.20 507.00,691.82 C507.20,692.44 507.20,693.06 507.11,693.68 C507.02,694.30 506.66,694.89 506.47,695.55 C506.29,696.20 506.07,697.27 505.99,697.62 L527.81,697.62 C527.73,697.27 527.51,696.20 527.33,695.55 C527.14,694.89 526.78,694.30 526.69,693.68 C526.60,693.06 526.60,692.44 526.80,691.82 C526.99,691.20 527.20,690.71 527.86,689.96 C528.52,689.21 529.63,688.28 530.73,687.30 C531.83,686.32 533.45,685.04 534.46,684.11 C535.47,683.18 536.30,682.35 536.80,681.71 C537.29,681.08 537.49,680.81 537.44,680.28 C537.38,679.75 537.01,679.30 536.48,678.52 C535.95,677.74 535.18,676.79 534.24,675.60 C533.30,674.40 531.88,672.76 530.84,671.34 C529.79,669.92 528.67,668.33 527.97,667.08 C527.27,665.84 526.92,664.90 526.64,663.89 C526.35,662.88 526.24,662.08 526.26,661.02 C526.29,659.96 526.48,658.71 526.80,657.51 C527.11,656.30 527.63,655.03 528.18,653.78 C528.73,652.54 529.59,651.12 530.09,650.06 C530.60,649.00 531.02,647.84 531.21,647.40 Z" fill="url(#vg1)"/>
<path d="M502.59,647.40 C502.78,647.84 503.20,649.00 503.71,650.06 C504.21,651.12 505.07,652.54 505.62,653.78 C506.17,655.03 506.69,656.30 507.00,657.51 C507.32,658.71 507.51,659.96 507.54,661.02 C507.56,662.08 507.45,662.88 507.16,663.89 C506.88,664.90 506.53,665.84 505.83,667.08 C505.13,668.33 504.01,669.92 502.96,671.34 C501.92,672.76 500.50,674.40 499.56,675.60 C498.62,676.79 497.85,677.74 497.32,678.52 C496.79,679.30 496.42,679.75 496.36,680.28 C496.31,680.81 496.51,681.08 497.00,681.71 C497.50,682.35 498.33,683.18 499.34,684.11 C500.35,685.04 501.97,686.32 503.07,687.30 C504.17,688.28 505.28,689.21 505.94,689.96 C506.60,690.71 506.81,691.20 507.00,691.82 C507.20,692.44 507.20,693.06 507.11,693.68 C507.02,694.30 506.66,694.89 506.47,695.55 C506.29,696.20 506.07,697.27 505.99,697.62 L527.81,697.62 C527.73,697.27 527.51,696.20 527.33,695.55 C527.14,694.89 526.78,694.30 526.69,693.68 C526.60,693.06 526.60,692.44 526.80,691.82 C526.99,691.20 527.20,690.71 527.86,689.96 C528.52,689.21 529.63,688.28 530.73,687.30 C531.83,686.32 533.45,685.04 534.46,684.11 C535.47,683.18 536.30,682.35 536.80,681.71 C537.29,681.08 537.49,680.81 537.44,680.28 C537.38,679.75 537.01,679.30 536.48,678.52 C535.95,677.74 535.18,676.79 534.24,675.60 C533.30,674.40 531.88,672.76 530.84,671.34 C529.79,669.92 528.67,668.33 527.97,667.08 C527.27,665.84 526.92,664.90 526.64,663.89 C526.35,662.88 526.24,662.08 526.26,661.02 C526.29,659.96 526.48,658.71 526.80,657.51 C527.11,656.30 527.63,655.03 528.18,653.78 C528.73,652.54 529.59,651.12 530.09,650.06 C530.60,649.00 531.02,647.84 531.21,647.40 Z" fill="url(#vg1v)" stroke="#c6d01e" stroke-width="1.20" stroke-linejoin="round"/>
<rect x="502.59" y="646.76" width="28.62" height="1.70" fill="#c6d01e"/>
<path d="M506.28,666.02 H527.52" stroke="#c6d01e" stroke-width="1.00" opacity="0.55"/>
<path d="M496.53,680.65 H537.27" stroke="#c6d01e" stroke-width="1.00" opacity="1"/>
<path d="M506.93,694.22 H526.87" stroke="#c6d01e" stroke-width="1.00" opacity="0.7"/>
<path d="M506.23,696.61 H527.57" stroke="#c6d01e" stroke-width="1.00" opacity="0.6"/>
<path d="M516.90,647.40 V697.62" stroke="#c6d01e" stroke-width="1.00"/>
<path d="M1111.18,284.00 C1111.37,284.46 1111.81,285.65 1112.34,286.75 C1112.86,287.86 1113.75,289.33 1114.32,290.61 C1114.89,291.90 1115.42,293.22 1115.75,294.47 C1116.08,295.72 1116.27,297.00 1116.30,298.11 C1116.33,299.21 1116.21,300.03 1115.92,301.08 C1115.62,302.13 1115.26,303.10 1114.54,304.39 C1113.81,305.67 1112.65,307.33 1111.56,308.80 C1110.48,310.26 1109.01,311.96 1108.04,313.20 C1107.06,314.44 1106.27,315.43 1105.72,316.23 C1105.17,317.04 1104.79,317.50 1104.73,318.05 C1104.68,318.60 1104.88,318.88 1105.39,319.54 C1105.91,320.20 1106.77,321.05 1107.82,322.02 C1108.86,322.98 1110.54,324.31 1111.67,325.32 C1112.81,326.34 1113.97,327.30 1114.65,328.08 C1115.33,328.86 1115.55,329.37 1115.75,330.01 C1115.95,330.65 1115.95,331.29 1115.86,331.94 C1115.77,332.58 1115.39,333.19 1115.20,333.87 C1115.01,334.55 1114.79,335.66 1114.70,336.01 L1137.30,336.01 C1137.21,335.66 1136.99,334.55 1136.80,333.87 C1136.61,333.19 1136.23,332.58 1136.14,331.94 C1136.05,331.29 1136.05,330.65 1136.25,330.01 C1136.45,329.37 1136.67,328.86 1137.35,328.08 C1138.03,327.30 1139.19,326.34 1140.33,325.32 C1141.46,324.31 1143.14,322.98 1144.18,322.02 C1145.23,321.05 1146.09,320.20 1146.61,319.54 C1147.12,318.88 1147.32,318.60 1147.27,318.05 C1147.21,317.50 1146.83,317.04 1146.28,316.23 C1145.73,315.43 1144.94,314.44 1143.96,313.20 C1142.99,311.96 1141.52,310.26 1140.44,308.80 C1139.35,307.33 1138.19,305.67 1137.46,304.39 C1136.74,303.10 1136.38,302.13 1136.08,301.08 C1135.79,300.03 1135.67,299.21 1135.70,298.11 C1135.73,297.00 1135.92,295.72 1136.25,294.47 C1136.58,293.22 1137.11,291.90 1137.68,290.61 C1138.25,289.33 1139.14,287.86 1139.66,286.75 C1140.19,285.65 1140.63,284.46 1140.82,284.00 Z" fill="url(#vg2)"/>
<path d="M1111.18,284.00 C1111.37,284.46 1111.81,285.65 1112.34,286.75 C1112.86,287.86 1113.75,289.33 1114.32,290.61 C1114.89,291.90 1115.42,293.22 1115.75,294.47 C1116.08,295.72 1116.27,297.00 1116.30,298.11 C1116.33,299.21 1116.21,300.03 1115.92,301.08 C1115.62,302.13 1115.26,303.10 1114.54,304.39 C1113.81,305.67 1112.65,307.33 1111.56,308.80 C1110.48,310.26 1109.01,311.96 1108.04,313.20 C1107.06,314.44 1106.27,315.43 1105.72,316.23 C1105.17,317.04 1104.79,317.50 1104.73,318.05 C1104.68,318.60 1104.88,318.88 1105.39,319.54 C1105.91,320.20 1106.77,321.05 1107.82,322.02 C1108.86,322.98 1110.54,324.31 1111.67,325.32 C1112.81,326.34 1113.97,327.30 1114.65,328.08 C1115.33,328.86 1115.55,329.37 1115.75,330.01 C1115.95,330.65 1115.95,331.29 1115.86,331.94 C1115.77,332.58 1115.39,333.19 1115.20,333.87 C1115.01,334.55 1114.79,335.66 1114.70,336.01 L1137.30,336.01 C1137.21,335.66 1136.99,334.55 1136.80,333.87 C1136.61,333.19 1136.23,332.58 1136.14,331.94 C1136.05,331.29 1136.05,330.65 1136.25,330.01 C1136.45,329.37 1136.67,328.86 1137.35,328.08 C1138.03,327.30 1139.19,326.34 1140.33,325.32 C1141.46,324.31 1143.14,322.98 1144.18,322.02 C1145.23,321.05 1146.09,320.20 1146.61,319.54 C1147.12,318.88 1147.32,318.60 1147.27,318.05 C1147.21,317.50 1146.83,317.04 1146.28,316.23 C1145.73,315.43 1144.94,314.44 1143.96,313.20 C1142.99,311.96 1141.52,310.26 1140.44,308.80 C1139.35,307.33 1138.19,305.67 1137.46,304.39 C1136.74,303.10 1136.38,302.13 1136.08,301.08 C1135.79,300.03 1135.67,299.21 1135.70,298.11 C1135.73,297.00 1135.92,295.72 1136.25,294.47 C1136.58,293.22 1137.11,291.90 1137.68,290.61 C1138.25,289.33 1139.14,287.86 1139.66,286.75 C1140.19,285.65 1140.63,284.46 1140.82,284.00 Z" fill="url(#vg2v)" stroke="#c6d01e" stroke-width="1.20" stroke-linejoin="round"/>
<rect x="1111.18" y="283.34" width="29.64" height="1.76" fill="#c6d01e"/>
<path d="M1115.00,303.29 H1137.00" stroke="#c6d01e" stroke-width="1.00" opacity="0.55"/>
<path d="M1104.90,318.44 H1147.10" stroke="#c6d01e" stroke-width="1.00" opacity="1"/>
<path d="M1115.67,332.49 H1136.33" stroke="#c6d01e" stroke-width="1.00" opacity="0.7"/>
<path d="M1114.95,334.97 H1137.05" stroke="#c6d01e" stroke-width="1.00" opacity="0.6"/>
<path d="M1116.81,284.00 C1116.93,284.46 1117.20,285.65 1117.53,286.75 C1117.85,287.86 1118.40,289.33 1118.76,290.61 C1119.11,291.90 1119.44,293.22 1119.65,294.47 C1119.85,295.72 1119.97,297.00 1119.99,298.11 C1120.00,299.21 1119.93,300.03 1119.75,301.08 C1119.57,302.13 1119.34,303.10 1118.89,304.39 C1118.44,305.67 1117.72,307.33 1117.05,308.80 C1116.38,310.26 1115.47,311.96 1114.86,313.20 C1114.26,314.44 1113.77,315.43 1113.43,316.23 C1113.09,317.04 1112.85,317.50 1112.81,318.05 C1112.78,318.60 1112.90,318.88 1113.22,319.54 C1113.54,320.20 1114.08,321.05 1114.73,322.02 C1115.38,322.98 1116.41,324.31 1117.12,325.32 C1117.82,326.34 1118.54,327.30 1118.96,328.08 C1119.38,328.86 1119.52,329.37 1119.65,330.01 C1119.77,330.65 1119.77,331.29 1119.71,331.94 C1119.66,332.58 1119.42,333.19 1119.30,333.87 C1119.18,334.55 1119.05,335.66 1119.00,336.01" stroke="#c6d01e" stroke-width="1.3" fill="none"/>
<path d="M1136.67,284.00 C1136.53,284.46 1136.22,285.65 1135.84,286.75 C1135.46,287.86 1134.82,289.33 1134.41,290.61 C1134.00,291.90 1133.62,293.22 1133.38,294.47 C1133.14,295.72 1133.00,297.00 1132.98,298.11 C1132.96,299.21 1133.05,300.03 1133.26,301.08 C1133.47,302.13 1133.73,303.10 1134.25,304.39 C1134.77,305.67 1135.61,307.33 1136.39,308.80 C1137.17,310.26 1138.23,311.96 1138.93,313.20 C1139.63,314.44 1140.20,315.43 1140.60,316.23 C1141.00,317.04 1141.27,317.50 1141.31,318.05 C1141.35,318.60 1141.21,318.88 1140.84,319.54 C1140.47,320.20 1139.85,321.05 1139.09,322.02 C1138.34,322.98 1137.13,324.31 1136.31,325.32 C1135.49,326.34 1134.66,327.30 1134.17,328.08 C1133.68,328.86 1133.52,329.37 1133.38,330.01 C1133.23,330.65 1133.23,331.29 1133.30,331.94 C1133.37,332.58 1133.64,333.19 1133.78,333.87 C1133.91,334.55 1134.07,335.66 1134.13,336.01" stroke="#c6d01e" stroke-width="1.3" fill="none"/>
<defs><radialGradient id="tvg" cx="0.4" cy="0.35" r="0.7"><stop offset="0" stop-color="#b5b955"/><stop offset="0.6" stop-color="#8a8f2c"/><stop offset="1" stop-color="#5f6418"/></radialGradient></defs>
<circle cx="516.9" cy="326.9" r="21" fill="url(#tvg)" stroke="#b8c220" stroke-width="1"/>
<circle cx="516.9" cy="326.9" r="15" fill="#6c7120" stroke="#c8d41e" stroke-width="2"/>
<circle cx="516.9" cy="326.9" r="9.2" fill="#c5c878"/>
<path d="M496,326.9 H538 M516.9,306 V348" stroke="#c4ce20" stroke-width="1.4" opacity="0.9"/>
<path d="M2,593 V200 Q2,194 8,194 H142 Q148,194 148,200 V593 Z" fill="#e9eaee"/>
<rect x="2" y="205" width="146" height="1" fill="#dfe0e4"/>
<circle cx="64" cy="199.5" r="1.3" fill="none" stroke="#a0a0a0" stroke-width="0.9"/>
<circle cx="71.5" cy="199.5" r="1.3" fill="none" stroke="#a0a0a0" stroke-width="0.9"/>
<circle cx="79" cy="199.5" r="1.3" fill="none" stroke="#a0a0a0" stroke-width="0.9"/>
<circle cx="86.5" cy="199.5" r="1.3" fill="none" stroke="#a0a0a0" stroke-width="0.9"/>
<rect x="2" y="595" width="146" height="397" rx="6" fill="#e9eaee"/>
<rect x="2" y="618" width="146" height="1" fill="#e0e1e5"/>
<text x="1.86" y="611.00" font-size="14.5" fill="#6a6a6a" textLength="43.68" lengthAdjust="spacingAndGlyphs">Osnap</text>
<rect x="125" y="597" width="1" height="21" fill="#e2e3e7"/>
<path d="M47,644 V628 Q47,619 56,619 H148 V644 Z" fill="#dcdde1"/>
<rect x="5.5" y="651.3" width="15" height="14.5" fill="#fff" stroke="#b9c0cf" stroke-width="1"/>
<path d="M8,658.8 L11.5,662.8 L18,654.3" stroke="#222" stroke-width="2.2" fill="none"/>
<text x="26.05" y="663.30" font-size="14.5" fill="#222" textLength="27.89" lengthAdjust="spacingAndGlyphs">Fine</text>
<rect x="5.5" y="671.3" width="15" height="14.5" fill="#fff" stroke="#b9c0cf" stroke-width="1"/>
<path d="M8,678.8 L11.5,682.8 L18,674.3" stroke="#222" stroke-width="2.2" fill="none"/>
<text x="27.20" y="683.35" font-size="14.5" fill="#222" textLength="40.63" lengthAdjust="spacingAndGlyphs">Vicino</text>
<rect x="5.5" y="691.4" width="15" height="14.5" fill="#fff" stroke="#b9c0cf" stroke-width="1"/>
<path d="M8,698.9 L11.5,702.9 L18,694.4" stroke="#222" stroke-width="2.2" fill="none"/>
<text x="26.02" y="703.40" font-size="14.5" fill="#222" textLength="38.67" lengthAdjust="spacingAndGlyphs">Punto</text>
<rect x="5.5" y="711.4" width="15" height="14.5" fill="#fff" stroke="#b9c0cf" stroke-width="1"/>
<path d="M8,718.9 L11.5,722.9 L18,714.4" stroke="#222" stroke-width="2.2" fill="none"/>
<text x="25.91" y="723.45" font-size="14.5" fill="#222" textLength="43.83" lengthAdjust="spacingAndGlyphs">Medio</text>
<rect x="5.5" y="731.5" width="15" height="14.5" fill="#fff" stroke="#b9c0cf" stroke-width="1"/>
<text x="26.49" y="743.50" font-size="14.5" fill="#222" textLength="26.13" lengthAdjust="spacingAndGlyphs">Cen</text>
<rect x="5.5" y="751.5" width="15" height="14.5" fill="#fff" stroke="#b9c0cf" stroke-width="1"/>
<path d="M8,759.0 L11.5,763.0 L18,754.5" stroke="#222" stroke-width="2.2" fill="none"/>
<text x="25.70" y="763.55" font-size="14.5" fill="#222" textLength="18.49" lengthAdjust="spacingAndGlyphs">Int</text>
<rect x="5.5" y="771.6" width="15" height="14.5" fill="#fff" stroke="#b9c0cf" stroke-width="1"/>
<path d="M8,779.1 L11.5,783.1 L18,774.6" stroke="#222" stroke-width="2.2" fill="none"/>
<text x="26.08" y="783.60" font-size="14.5" fill="#222" textLength="29.57" lengthAdjust="spacingAndGlyphs">Perp</text>
<rect x="5.5" y="791.6" width="15" height="14.5" fill="#fff" stroke="#b9c0cf" stroke-width="1"/>
<path d="M8,799.1 L11.5,803.1 L18,794.6" stroke="#222" stroke-width="2.2" fill="none"/>
<text x="26.92" y="803.65" font-size="14.5" fill="#222" textLength="22.55" lengthAdjust="spacingAndGlyphs">Tan</text>
<rect x="5.5" y="811.7" width="15" height="14.5" fill="#fff" stroke="#b9c0cf" stroke-width="1"/>
<path d="M8,819.2 L11.5,823.2 L18,814.7" stroke="#222" stroke-width="2.2" fill="none"/>
<text x="26.45" y="823.70" font-size="14.5" fill="#222" textLength="36.74" lengthAdjust="spacingAndGlyphs">Quad</text>
<rect x="5.5" y="831.8" width="15" height="14.5" fill="#fff" stroke="#b9c0cf" stroke-width="1"/>
<text x="25.88" y="843.75" font-size="14.5" fill="#222" textLength="39.38" lengthAdjust="spacingAndGlyphs">Nodo</text>
<rect x="5.5" y="851.8" width="15" height="14.5" fill="#fff" stroke="#b9c0cf" stroke-width="1"/>
<text x="27.20" y="863.80" font-size="14.5" fill="#222" textLength="45.09" lengthAdjust="spacingAndGlyphs">Vertice</text>
<rect x="5.5" y="871.8" width="15" height="14.5" fill="#fff" stroke="#b9c0cf" stroke-width="1"/>
<text x="25.98" y="883.85" font-size="14.5" fill="#222" textLength="52.56" lengthAdjust="spacingAndGlyphs">Proietta</text>
<rect x="5.5" y="891.9" width="15" height="14.5" fill="#fff" stroke="#b9c0cf" stroke-width="1"/>
<text x="25.95" y="903.90" font-size="14.5" fill="#222" textLength="63.51" lengthAdjust="spacingAndGlyphs">Disabilita</text>
<rect x="150" y="964" width="1460" height="28" fill="#dcdde1"/>
<path d="M152,964 H252 V986 Q252,991 247,991 H157 Q152,991 152,986 Z" fill="#e9eaee" stroke="#c9cfdd" stroke-width="0.8"/>
<text x="167.12" y="984.00" font-size="14.5" fill="#222" textLength="74.07" lengthAdjust="spacingAndGlyphs">Prospettica</text>
<text x="262.34" y="984.00" font-size="14.5" fill="#777" textLength="65.95" lengthAdjust="spacingAndGlyphs">Superiore</text>
<text x="348.18" y="984.00" font-size="14.5" fill="#777" textLength="55.75" lengthAdjust="spacingAndGlyphs">Frontale</text>
<text x="425.24" y="984.00" font-size="14.5" fill="#777" textLength="42.79" lengthAdjust="spacingAndGlyphs">Destra</text>
<path d="M494.7,974 H497.7 V978.5 H502.2 V981.5 H497.7 V986 H494.7 V981.5 H490.2 V978.5 H494.7 Z" fill="none" stroke="#7a7a7a" stroke-width="1"/>
<rect x="252" y="967" width="1.3" height="24" fill="#d4d83a"/>
<rect x="413.5" y="967" width="1.5" height="24" fill="#3f3d20"/>
<rect x="478" y="967" width="1" height="24" fill="#e3e49a"/>
<rect x="1614" y="194" width="303" height="798" rx="6" fill="#e9eaee"/>
<path d="M1893,992 V270 Q1893,262 1901,262 H1920 V992 Z" fill="#dcdde1"/>
<rect x="1614" y="217" width="279" height="1" fill="#dfe0e4"/>
<text x="1614.43" y="210.80" font-size="14.5" fill="#6a6a6a" textLength="33.38" lengthAdjust="spacingAndGlyphs">Livelli</text>
<rect x="1896" y="197" width="1" height="20" fill="#e2e3e7"/>
<rect x="1615" y="289" width="272" height="25.5" rx="12.7" fill="#fff" stroke="#b9c3d6" stroke-width="1"/>
<circle cx="1626.3" cy="300.6" r="5.2" fill="none" stroke="#222" stroke-width="1.4"/><path d="M1630,304.5 L1633.5,308" stroke="#222" stroke-width="1.6"/>
<text x="1636.82" y="306.90" font-size="14.5" fill="#6b6b6b" textLength="36.45" lengthAdjust="spacingAndGlyphs">Cerca</text>
<rect x="1614" y="322.5" width="273.5" height="668" fill="#ffffff"/>
<rect x="1687.5" y="322.5" width="1" height="29" fill="#e4e6ea"/>
<rect x="1712.6" y="322.5" width="1" height="29" fill="#e4e6ea"/>
<rect x="1737.6" y="322.5" width="1" height="29" fill="#e4e6ea"/>
<rect x="1762.7" y="322.5" width="1" height="29" fill="#e4e6ea"/>
<rect x="1787.7" y="322.5" width="1" height="29" fill="#e4e6ea"/>
<text x="1614.01" y="342.80" font-size="14.5" fill="#222" textLength="23.14" lengthAdjust="spacingAndGlyphs">ello</text>
<text x="1793.35" y="342.80" font-size="14.5" fill="#222" textLength="64.11" lengthAdjust="spacingAndGlyphs">Materiale</text>
<rect x="1614" y="352" width="273.5" height="22.5" fill="#6ab6fb"/>
<rect x="1686.5" y="353.5" width="1" height="20" fill="#8cc6fb"/><rect x="1688.5" y="353.5" width="1" height="20" fill="#8cc6fb"/>
<rect x="1711.6" y="353.5" width="1" height="20" fill="#8cc6fb"/><rect x="1713.6" y="353.5" width="1" height="20" fill="#8cc6fb"/>
<rect x="1736.6" y="353.5" width="1" height="20" fill="#8cc6fb"/><rect x="1738.6" y="353.5" width="1" height="20" fill="#8cc6fb"/>
<rect x="1761.7" y="353.5" width="1" height="20" fill="#8cc6fb"/><rect x="1763.7" y="353.5" width="1" height="20" fill="#8cc6fb"/>
<rect x="1786.7" y="353.5" width="1" height="20" fill="#8cc6fb"/><rect x="1788.7" y="353.5" width="1" height="20" fill="#8cc6fb"/>
<g clip-path="url(#livclip)"><text x="1609.98" y="367.80" font-size="14.5" fill="#1c1c1c" font-weight="bold" textLength="75.08" lengthAdjust="spacingAndGlyphs">Predefinita</text></g>
<path d="M1695.5,363 L1700,368 L1708,358" stroke="#333" stroke-width="1.8" fill="none"/>
<rect x="1767.5" y="355.5" width="16.5" height="15.5" fill="#bcc42a" stroke="#222" stroke-width="1.4"/>
<defs><radialGradient id="sph" cx="0.4" cy="0.35" r="0.7"><stop offset="0" stop-color="#ffffff"/><stop offset="0.7" stop-color="#e2e2e2"/><stop offset="1" stop-color="#9a9a9a"/></radialGradient></defs>
<circle cx="1798.6" cy="363" r="7.8" fill="url(#sph)" stroke="#333" stroke-width="1.1"/>
<text x="1812.16" y="367.80" font-size="14.5" fill="#1c1c1c" font-weight="bold" textLength="41.34" lengthAdjust="spacingAndGlyphs">Gesso</text>
<rect x="1633" y="977" width="97" height="9" rx="4.5" fill="#c2c2c2"/>
<rect x="0" y="992" width="1920" height="28" fill="#e9eaee"/>
<rect x="1614" y="990" width="274" height="2" fill="#ffffff"/>
<rect x="10.5" y="998" width="15" height="15.5" fill="none" stroke="#333" stroke-width="2.2"/><rect x="9.5" y="997" width="5" height="17.5" fill="#333"/>
<rect x="1894.5" y="998" width="15" height="15.5" fill="none" stroke="#333" stroke-width="2.2"/><rect x="1905" y="997" width="5.5" height="17.5" fill="#333"/>
<rect x="1082" y="993.3" width="63.5" height="23" rx="3" fill="#d3dbee"/>
<rect x="1149" y="993.3" width="98.5" height="23" rx="3" fill="#d3dbee"/>
<rect x="1766.2" y="993.3" width="57" height="23" rx="3" fill="#d3dbee"/>
<text x="56.85" y="1011.20" font-size="14.5" fill="#444" textLength="47.02" lengthAdjust="spacingAndGlyphs">PianoC</text>
<text x="163.56" y="1011.20" font-size="14.5" fill="#444" textLength="46.86" lengthAdjust="spacingAndGlyphs">x 1.199</text>
<text x="265.90" y="1011.20" font-size="14.5" fill="#444" textLength="55.12" lengthAdjust="spacingAndGlyphs">y 23.880</text>
<text x="390.43" y="1011.20" font-size="14.5" fill="#444" textLength="19.16" lengthAdjust="spacingAndGlyphs">z 0</text>
<text x="483.01" y="1011.20" font-size="14.5" fill="#444" textLength="63.83" lengthAdjust="spacingAndGlyphs">Millimetri</text>
<text x="609.29" y="1011.20" font-size="14.5" fill="#444" textLength="72.01" lengthAdjust="spacingAndGlyphs">Predefinita</text>
<text x="832.26" y="1011.20" font-size="14.5" fill="#444" textLength="105.17" lengthAdjust="spacingAndGlyphs">Snap alla griglia</text>
<text x="964.19" y="1011.20" font-size="14.5" fill="#444" textLength="31.37" lengthAdjust="spacingAndGlyphs">Orto</text>
<text x="1018.84" y="1011.20" font-size="14.5" fill="#444" textLength="50.14" lengthAdjust="spacingAndGlyphs">Planare</text>
<text x="1091.92" y="1011.20" font-size="14.5" fill="#1e1e1e" font-weight="bold" textLength="44.98" lengthAdjust="spacingAndGlyphs">Osnap</text>
<text x="1159.06" y="1011.20" font-size="14.5" fill="#1e1e1e" font-weight="bold" textLength="79.70" lengthAdjust="spacingAndGlyphs">SmartTrack</text>
<text x="1265.57" y="1011.20" font-size="14.5" fill="#444" textLength="115.90" lengthAdjust="spacingAndGlyphs">Gumball (PianoC)</text>
<text x="1429.08" y="1011.20" font-size="14.5" fill="#444" textLength="193.41" lengthAdjust="spacingAndGlyphs">PianoC automatico (oggetto)</text>
<text x="1656.14" y="1011.20" font-size="14.5" fill="#444" textLength="93.81" lengthAdjust="spacingAndGlyphs">Registra storia</text>
<text x="1776.24" y="1011.20" font-size="14.5" fill="#1e1e1e" font-weight="bold" textLength="37.96" lengthAdjust="spacingAndGlyphs">Filtro</text>
<path d="M1841,1002 V1011 M1841,1002 L1845,1008" stroke="#555" stroke-width="1.2" fill="none"/>
<rect x="582.5" y="996" width="19" height="19" fill="#bcc42a" stroke="#1a1a1a" stroke-width="1.5"/>
<rect x="1406" y="1003" width="11" height="9" rx="1.5" fill="none" stroke="#aaa" stroke-width="1.2"/><path d="M1408.5,1003 V1000.5 Q1408.5,997.5 1411.5,997.5 Q1414.5,997.5 1414.5,1000.5 V1003" fill="none" stroke="#aaa" stroke-width="1.2"/>
<rect x="0" y="1020" width="1920" height="60" fill="url(#tbg)"/>
<rect x="0" y="1020" width="1920" height="1" fill="#4a4240"/>
<path d="M29,1058 Q24,1058 25,1051 Q26,1045 33,1045 Q35,1038 43,1038 Q52,1038 54,1046 Q56,1047 56,1052 Q56,1058 50,1058 Z" fill="url(#cloud)"/>
<path d="M42,1050 L50,1058 Q50,1064 45,1064 Q40,1064 41,1058 Z" fill="#2f8cf5"/>
<circle cx="49" cy="1037.8" r="9.5" fill="#c4261d"/>
<text x="44.95" y="1042.50" font-size="12.5" fill="#fff" font-weight="bold">1</text>
<text x="63.22" y="1044.70" font-size="14.5" fill="#f0f0f0" textLength="31.19" lengthAdjust="spacingAndGlyphs">13°C</text>
<text x="62.98" y="1064.90" font-size="14.5" fill="#e6e6e6" textLength="76.11" lengthAdjust="spacingAndGlyphs">Pioggerella</text>
<rect x="530.5" y="1036.3" width="13.6" height="13.6" rx="1" fill="url(#win)"/>
<rect x="545.3" y="1036.3" width="13.6" height="13.6" rx="1" fill="url(#win)"/>
<rect x="530.5" y="1051.1" width="13.6" height="13.6" rx="1" fill="url(#win)"/>
<rect x="545.3" y="1051.1" width="13.6" height="13.6" rx="1" fill="url(#win)"/>
<rect x="577" y="1031" width="272.5" height="38" rx="19" fill="#f1f1f1"/>
<circle cx="598" cy="1047.8" r="6.8" fill="none" stroke="#222" stroke-width="1.9"/><path d="M602.8,1052.6 L607.5,1057.3" stroke="#222" stroke-width="2.2" stroke-linecap="round"/>
<text x="621.19" y="1057.30" font-size="16" fill="#5b5b5b" textLength="43.17" lengthAdjust="spacingAndGlyphs">Cerca</text>
<rect x="866" y="1043" width="18" height="18" rx="2" fill="#6e6e6e"/><rect x="874" y="1036" width="22" height="19" rx="2" fill="#d8d8d8"/><rect x="874" y="1043" width="10" height="12" fill="#9a9a9a"/>
<circle cx="932" cy="1036.5" r="4.5" fill="#7b83eb"/><circle cx="942" cy="1040" r="3.5" fill="#7b83eb"/><path d="M925,1046 H939 V1062 Q932,1064 925,1060 Z" fill="#5b5fc7"/><path d="M939,1045 H948 V1058 Q944,1063 939,1061 Z" fill="#7b83eb"/><rect x="921" y="1048" width="11" height="11" rx="1.5" fill="#4b53bc"/>
<text x="923.41" y="1057.50" font-size="9" fill="#fff" font-weight="bold">T</text>
<path d="M977,1038 H990 L993,1041 H1006 V1065 H977 Z" fill="#e8a91a"/><rect x="977" y="1043" width="29.5" height="22" fill="#ffd04a"/><rect x="985" y="1057" width="13" height="4" rx="1" fill="#1f6fd6"/>
<rect x="987" y="1071" width="8" height="3" rx="1.5" fill="#9a9a9a"/>
<circle cx="1046" cy="1049.5" r="15" fill="url(#edg)"/><path d="M1036,1052 Q1040,1042 1050,1044 Q1058,1046 1057,1053 L1044,1053 Q1045,1060 1056,1059 Q1050,1066 1040,1062 Q1034,1058 1036,1052 Z" fill="#0b3f8f"/>
<rect x="1042" y="1071" width="8" height="3" rx="1.5" fill="#9a9a9a"/>
<path d="M1094,1041 V1037 Q1094,1034 1097,1034 H1104 Q1107,1034 1107,1037 V1041" fill="none" stroke="#1aa0e0" stroke-width="2"/>
<rect x="1086" y="1040" width="29.5" height="25" rx="3" fill="#f4f4f4"/>
<rect x="1095" y="1047" width="5.5" height="5.5" fill="#f25022"/><rect x="1101.5" y="1047" width="5.5" height="5.5" fill="#7fba00"/><rect x="1095" y="1053.5" width="5.5" height="5.5" fill="#00a4ef"/><rect x="1101.5" y="1053.5" width="5.5" height="5.5" fill="#ffb900"/>
<circle cx="1155.9" cy="1049.7" r="15" fill="#0a55d6" stroke="#fff" stroke-width="1"/>
<text x="1144" y="1056" font-size="17" font-style="italic" font-weight="bold" fill="#fff">hp</text>
<circle cx="1210.8" cy="1049.7" r="15" fill="#1a9be0" stroke="#e8f4fb" stroke-width="1.2"/>
<text x="1204" y="1059" font-size="22" font-weight="bold" fill="#fff">?</text>
<circle cx="1222" cy="1038.6" r="10" fill="#fbc10f"/>
<path d="M1252.5,1035.5 L1266,1043 L1279,1035.5 V1058 L1266,1065 L1252.5,1058 Z M1257,1043 V1055.5 L1266,1060.5 L1274.5,1055.5 V1043 L1266,1048 Z" fill="#c0302a" fill-rule="evenodd"/>
<rect x="1305.5" y="1038.6" width="30" height="22.5" fill="#3aa0e6"/><rect x="1307.5" y="1040.5" width="26" height="18.5" fill="#cfe8fb"/>
<circle cx="1315" cy="1048" r="5.5" fill="#2a8ee0"/><path d="M1315,1048 V1042.5 A5.5,5.5 0 0 1 1320.5,1048 Z" fill="#f09a2a"/>
<rect x="1309" y="1055.5" width="10" height="1.5" fill="#f09a2a"/><rect x="1319" y="1055.5" width="12" height="1.5" fill="#2a8ee0"/>
<rect x="1325" y="1043" width="4" height="2.5" fill="#fff" stroke="#2a8ee0" stroke-width="0.6"/><rect x="1325" y="1048" width="4" height="2.5" fill="#fff" stroke="#2a8ee0" stroke-width="0.6"/>
<rect x="1316.5" y="1071" width="8" height="3" rx="1.5" fill="#9a9a9a"/>
<rect x="1351.6" y="1025.3" width="48.7" height="48.7" rx="4" fill="#3a2f2b"/>
<g transform="translate(1360.4,1035) scale(1.52)"><rect x="0" y="0" width="20" height="20" fill="#000"/><path d="M0,0 H3.2 Q2.2,5 2.3,8 Q1.5,9.5 0,10.5 Z" fill="#f4f4f4"/><path d="M5,1 Q8,1 9,5 Q10,8.5 13,10 L19.5,11.5 L16,15 Q14,19 12.5,19.5 L3,13 Q1.5,11 3.5,9 Q6,6.5 5,1 Z" fill="#f4f4f4"/><path d="M4.5,11.5 L10,15.5 M6,9.5 L9,11" stroke="#333" stroke-width="1.2"/><path d="M16,2.5 Q18.5,2.5 18.5,4.5 Q18.5,6 16.5,6.2 Q19,6.5 19,8.5 Q19,10.5 16.5,10.5 Q14.5,10.5 14.5,8.5 Q14.5,6.5 16.5,6.2 Q14.8,6 14.8,4.5 Q14.8,2.5 16,2.5 Z" fill="none" stroke="#bbb" stroke-width="1"/></g>
<rect x="1366" y="1070" width="19.7" height="3.5" rx="1.75" fill="#4cc2ff"/>
<path d="M1636,1053 L1643,1046 L1650,1053" stroke="#fff" stroke-width="1.6" fill="none"/>
<path d="M1675,1055 Q1672,1055 1673,1050 Q1674,1045 1680,1045 Q1684,1042 1688,1046 Q1692,1047 1691,1052 Q1690,1055 1687,1055 Z" fill="#d6d6d6"/><circle cx="1687.5" cy="1054" r="4.6" fill="#1976d2"/><rect x="1687" y="1052.3" width="1.1" height="4" fill="#fff"/>
<path d="M1713.5,1048 Q1723,1039 1732.5,1048 M1716.5,1051 Q1723,1045 1729.5,1051 M1719.5,1054 Q1723,1051 1726.5,1054" stroke="#fff" stroke-width="1.6" fill="none"/><circle cx="1723" cy="1056.5" r="1.5" fill="#fff"/>
<path d="M1743.5,1046 H1747 L1752,1042 V1057 L1747,1053 H1743.5 Z" fill="none" stroke="#fff" stroke-width="1.3"/><path d="M1754.5,1046 Q1757,1049.5 1754.5,1053 M1757.5,1043.5 Q1762,1049.5 1757.5,1055.5" stroke="#ddd" stroke-width="1.1" fill="none"/>
<rect x="1773.5" y="1043" width="22" height="13" rx="3" fill="none" stroke="#fff" stroke-width="1.4"/><rect x="1775.5" y="1045" width="18" height="9" rx="1" fill="#8fd19e"/><rect x="1796" y="1047" width="2" height="5" fill="#fff"/><path d="M1785,1039 L1782,1046 H1786 L1784,1052" stroke="#fff" stroke-width="1.3" fill="none"/>
<text x="1859.59" y="1045.00" font-size="14.5" fill="#f2f2f2" textLength="36.01" lengthAdjust="spacingAndGlyphs">18:41</text>
<text x="1818.02" y="1064.50" font-size="14.5" fill="#f2f2f2" textLength="77.66" lengthAdjust="spacingAndGlyphs">20/02/2026</text>
<g transform="translate(30.50,166.00)"><path d="M-9,-12.5 H4 L9.5,-7 V12.5 H-9 Z" fill="url(#gWhite)" stroke="#111" stroke-width="1.8" stroke-linejoin="round"/><path d="M4,-12.5 V-7 H9.5" fill="none" stroke="#111" stroke-width="1"/></g>
<g transform="translate(65.00,166.00)"><path d="M-12,9 V-6 H-4 L-2,-8 H6 V-4" fill="url(#gYellow)" stroke="#111" stroke-width="1.4"/><path d="M-12,9.5 L-8,-2 H13 L9,9.5 Z" fill="url(#gYellow)" stroke="#111" stroke-width="1.6" stroke-linejoin="round"/></g>
<g transform="translate(101.00,166.00)"><rect x="-12.5" y="-12.5" width="25" height="25" rx="2" fill="#c8b36a" stroke="#111" stroke-width="2"/><rect x="-8.5" y="-11" width="17" height="9" fill="#d8d8d8" stroke="#7a6a30" stroke-width="0.8"/><rect x="-5" y="3.5" width="11" height="8" fill="#8a8a8a" stroke="#111" stroke-width="1"/><rect x="-3.5" y="5" width="2.5" height="5" fill="#c8b36a"/></g>
<path d="M119.0,177.5 V184.0 H112.5 Z" fill="#6e6e6e"/>
<g transform="translate(136.00,166.00)"><path d="M-6,-12 H6 L9,-9 V-1 H-6 Z" fill="#fff" stroke="#111" stroke-width="1.4"/><rect x="-2" y="-9" width="5" height="4" fill="#bbb"/><path d="M-12,0 H11 L12.5,2 V11 H-12 Z" fill="#9a9a9a" stroke="#111" stroke-width="1.6"/><path d="M-12,4 H12 M-12,7.5 H12" stroke="#e0e0e0" stroke-width="1.2"/></g>
<g transform="translate(172.00,166.00)"><path d="M-11,-9 H4 V9 L0,13 H-11 Z" fill="url(#gWhite)" stroke="#111" stroke-width="1.8"/><path d="M-3,-7 L2,-11 H9 V-8 H12 V-12 M2,-11 L-4,-6" fill="#fff" stroke="#111" stroke-width="1.3"/><rect x="9" y="-13.5" width="3" height="6" fill="#111"/></g>
<g transform="translate(206.00,166.00)"><path d="M-6,-11 L4,6 M6,-11 L-4,6" stroke="#111" stroke-width="1.6"/><ellipse cx="-5.5" cy="8.5" rx="3" ry="2.6" fill="none" stroke="#1a2a8a" stroke-width="1.4"/><ellipse cx="5.5" cy="8.5" rx="3" ry="2.6" fill="none" stroke="#1a2a8a" stroke-width="1.4"/></g>
<g transform="translate(240.50,166.00)"><path d="M-9,-12 H1 L4,-9 V6 H-9 Z" fill="#fff" stroke="#111" stroke-width="1.3"/><path d="M-3,-5 H6 L9,-2 V12.5 H-3 Z" fill="url(#gWhite)" stroke="#111" stroke-width="1.5"/></g>
<g transform="translate(276.00,166.00)"><rect x="-9" y="-10" width="18" height="22" rx="2.5" fill="#fbd46a" stroke="#111" stroke-width="1.8"/><rect x="-4" y="-12.5" width="8" height="4" rx="1" fill="#fff" stroke="#111" stroke-width="1.3"/></g>
<g transform="translate(311.00,166.00)"><path d="M-9,0 Q-2,-9 7,-6 Q11,-4 12,1" fill="none" stroke="#111" stroke-width="2.8"/><path d="M-13,4 L-10,-5 L-4,1 Z" fill="#111"/></g>
<path d="M329.0,177.5 V184.0 H322.5 Z" fill="#6e6e6e"/>
<g transform="translate(345.00,166.00)"><path d="M-4,13 L-9,2 Q-11,-1 -8,-1 L-5,3 V-10 Q-5,-12 -3,-12 Q-1,-12 -1,-10 V-1 V-12 Q-1,-14 1,-14 Q3,-14 3,-12 V-1 V-10 Q3,-12 5,-12 Q7,-12 7,-10 V-1 V-7 Q7,-9 9,-9 Q11,-9 11,-7 V4 Q11,9 7,13 Z" fill="#fff" stroke="#111" stroke-width="1.3" stroke-linejoin="round"/></g>
<g transform="translate(381.00,166.00)"><ellipse cx="0" cy="1" rx="13" ry="4" fill="none" stroke="#555" stroke-width="1"/><ellipse cx="0" cy="0" rx="3.5" ry="13" fill="none" stroke="#555" stroke-width="1"/><path d="M3,11 L3,-6 M0,-4 L3,-9 L6,-4 Z M-7,4 H3 M-4,1 L-8,4 L-4,7 Z" stroke="#111" stroke-width="1.6" fill="#111"/></g>
<g transform="translate(415.00,166.00)"><path d="M-0.9,2.1 L-8.5,10.5" stroke="#111" stroke-width="2.6" stroke-linecap="round"/><circle cx="4.2" cy="-3" r="7.3" fill="#fff" stroke="#111" stroke-width="1.5"/><path d="M1.2,-5.5 H7.2 M4.2,-8.3 V-2.7 M1.2,-0.3 H7.2" stroke="#111" stroke-width="1.3"/></g>
<g transform="translate(452.00,166.00)"><rect x="-6" y="-12.5" width="19" height="17" fill="none" stroke="#111" stroke-width="1.4" stroke-dasharray="2.2,1.6"/><path d="M-6.9,5.4 L-12.5,11" stroke="#111" stroke-width="2.6" stroke-linecap="round"/><circle cx="-2" cy="0.5" r="7" fill="#fff" stroke="#111" stroke-width="1.5"/></g>
<g transform="translate(486.00,166.00)"><path d="M-12.5,-7 V-12.5 H-7 Z M12.5,-7 V-12.5 H7 Z M-12.5,7 V12.5 H-7 Z M12.5,7 V12.5 H7 Z" fill="#111"/><path d="M-4.1,3.6 L-8.5,10" stroke="#111" stroke-width="2.6" stroke-linecap="round"/><circle cx="1.5" cy="-2" r="8" fill="#fff" stroke="#111" stroke-width="1.5"/></g>
<g transform="translate(520.50,166.00)"><path d="M-3.8,4.3 L-10,11" stroke="#111" stroke-width="2.6" stroke-linecap="round"/><circle cx="2.5" cy="-2" r="9" fill="#fff" stroke="#111" stroke-width="1.5"/><circle cx="4.5" cy="-4.5" r="3.4" fill="#f5d800" stroke="#b8a000" stroke-width="0.6"/><circle cx="0" cy="1" r="3.4" fill="#f5d800" stroke="#b8a000" stroke-width="0.6"/></g>
<g transform="translate(555.50,166.00)"><path d="M-8,-7 Q0,-15 11,-7" fill="none" stroke="#111" stroke-width="3"/><path d="M-12,-3 L-9,-11 L-4,-5 Z" fill="#111"/><path d="M-2.5,7.5 L-6,12.5" stroke="#111" stroke-width="2.6" stroke-linecap="round"/><circle cx="2" cy="3" r="6.5" fill="#fff" stroke="#111" stroke-width="1.5"/></g>
<path d="M573.5,177.5 V184.0 H567.0 Z" fill="#6e6e6e"/>
<g transform="translate(590.50,166.00)"><rect x="-12.5" y="-11.5" width="25" height="23" fill="#c6c6c6" stroke="#111" stroke-width="2"/><path d="M0,-11.5 V11.5 M-12.5,0 H12.5" stroke="#111" stroke-width="1.8"/><rect x="1.5" y="-11" width="4" height="1.2" fill="#1a3aa0"/></g>
<path d="M608.5,177.5 V184.0 H602.0 Z" fill="#6e6e6e"/>
<g transform="translate(626.00,166.00)"><path d="M-12,3 Q-12,-1 -8,-2 L-4,-3 L-1,-7 H7 L9,-3 Q12,-2 12,2 V4 H-12 Z" fill="#e02020" stroke="#8a0000" stroke-width="0.6"/><rect x="1" y="-6" width="5" height="3" fill="#fff"/><circle cx="-6" cy="4" r="2.6" fill="#222" stroke="#fff" stroke-width="0.8"/><circle cx="6" cy="4" r="2.6" fill="#222" stroke="#fff" stroke-width="0.8"/><path d="M-14,7.5 H14" stroke="#666" stroke-width="0.8"/></g>
<path d="M644.0,177.5 V184.0 H637.5 Z" fill="#6e6e6e"/>
<g transform="translate(661.00,166.00)"><path d="M-13,0 L-3,-7 L14,-3 L4,13 Z" fill="none" stroke="#555" stroke-width="0.8"/><path d="M-10.5,-1.8 L6.5,9.0" stroke="#555" stroke-width="0.7"/><path d="M-8.8,3.2 L1.2,-6.0" stroke="#555" stroke-width="0.7"/><path d="M-8.0,-3.5 L9.0,5.0" stroke="#555" stroke-width="0.7"/><path d="M-4.5,6.5 L5.5,-5.0" stroke="#555" stroke-width="0.7"/><path d="M-5.5,-5.2 L11.5,1.0" stroke="#555" stroke-width="0.7"/><path d="M-0.2,9.8 L9.8,-4.0" stroke="#555" stroke-width="0.7"/><path d="M0,0 L2,-6" stroke="#20a020" stroke-width="1.6"/><path d="M0,0 L10,3.5" stroke="#e02020" stroke-width="1.6"/><rect x="-2.5" y="-2.5" width="5" height="5" fill="#fff" stroke="#111" stroke-width="1.2"/></g>
<path d="M679.0,177.5 V184.0 H672.5 Z" fill="#6e6e6e"/>
<g transform="translate(695.00,166.00)"><circle cx="0" cy="0" r="11" fill="none" stroke="#444" stroke-width="1"/><rect x="-3" y="-2" width="4" height="4" fill="#fff" stroke="#111" stroke-width="1.2"/><path d="M1,0 H14" stroke="#111" stroke-width="1.1"/></g>
<path d="M713.0,177.5 V184.0 H706.5 Z" fill="#6e6e6e"/>
<g transform="translate(731.00,166.00)"><circle cx="-4.5" cy="-4.5" r="3.6" fill="#f8d200" stroke="#c89000" stroke-width="0.7"/><rect x="1.5" y="-3" width="8" height="7.5" fill="#f8d200" stroke="#c89000" stroke-width="0.7"/><path d="M-2.5,8 L-5.5,13 H0.5 Z" fill="none" stroke="#c07010" stroke-width="1"/><path d="M8,-13 H11.5 V-9.5 M-11.5,9.5 V13 H-8" fill="none" stroke="#111" stroke-width="1.2"/></g>
<path d="M749.0,177.5 V184.0 H742.5 Z" fill="#6e6e6e"/>
<g transform="translate(766.00,166.00)"><path d="M-3,12 V6 Q-9,1 -9,-5 Q-9,-12 0,-12.5 Q9,-12 9,-5 Q9,1 3,6 V12 Z" fill="url(#gBulb)" stroke="#333" stroke-width="1.2"/><rect x="-3" y="8" width="6" height="4.5" rx="1.5" fill="#aaa" stroke="#333" stroke-width="0.8"/></g>
<path d="M784.0,177.5 V184.0 H777.5 Z" fill="#6e6e6e"/>
<g transform="translate(800.80,166.00)"><path d="M-4.5,-2 V-6 Q-4.5,-10.5 0,-10.5 Q4.5,-10.5 4.5,-6 V-2" fill="none" stroke="#111" stroke-width="2"/><rect x="-7.5" y="-2" width="15" height="12" rx="1.5" fill="url(#gGray)" stroke="#111" stroke-width="1.5"/><path d="M-5,2 H5 M-5,5 H5" stroke="#777" stroke-width="0.8"/></g>
<path d="M818.8,177.5 V184.0 H812.3 Z" fill="#6e6e6e"/>
<g transform="translate(836.00,166.00)"><path d="M-12,-11 L11,-6 L12,4 L-2,12 L-12,-1 Z" fill="#fff"/><path d="M-12,-11 L11,-6 L11,-2 L-2,3 L-12,-6 Z" fill="#ff8a5c"/><path d="M-2,3 L11,-2 V1.5 L-2,7 Z" fill="#e02818"/><path d="M-12,-1 L-2,9.5 L12,2.5 V4 L-2,12 Z" fill="#2838b0"/><path d="M-12,-11 L11,-6 L12,4 L-2,12 L-12,-1 Z" fill="none" stroke="#111" stroke-width="1.5" stroke-linejoin="round"/></g>
<path d="M854.0,177.5 V184.0 H847.5 Z" fill="#6e6e6e"/>
<g transform="translate(871.00,166.00)"><path d="M0.00,-9.30 A9.3,9.3 0 0 1 2.52,-8.95" stroke="#ff0000" stroke-width="5.2" fill="none"/><path d="M2.41,-8.98 A9.3,9.3 0 0 1 4.76,-7.99" stroke="#ff003f" stroke-width="5.2" fill="none"/><path d="M4.65,-8.05 A9.3,9.3 0 0 1 6.66,-6.49" stroke="#ff007f" stroke-width="5.2" fill="none"/><path d="M6.58,-6.58 A9.3,9.3 0 0 1 8.11,-4.54" stroke="#ff00bf" stroke-width="5.2" fill="none"/><path d="M8.05,-4.65 A9.3,9.3 0 0 1 9.01,-2.29" stroke="#ff00ff" stroke-width="5.2" fill="none"/><path d="M8.98,-2.41 A9.3,9.3 0 0 1 9.30,0.12" stroke="#bf00ff" stroke-width="5.2" fill="none"/><path d="M9.30,0.00 A9.3,9.3 0 0 1 8.95,2.52" stroke="#7f00ff" stroke-width="5.2" fill="none"/><path d="M8.98,2.41 A9.3,9.3 0 0 1 7.99,4.76" stroke="#3f00ff" stroke-width="5.2" fill="none"/><path d="M8.05,4.65 A9.3,9.3 0 0 1 6.49,6.66" stroke="#0000ff" stroke-width="5.2" fill="none"/><path d="M6.58,6.58 A9.3,9.3 0 0 1 4.54,8.11" stroke="#003fff" stroke-width="5.2" fill="none"/><path d="M4.65,8.05 A9.3,9.3 0 0 1 2.29,9.01" stroke="#007fff" stroke-width="5.2" fill="none"/><path d="M2.41,8.98 A9.3,9.3 0 0 1 -0.12,9.30" stroke="#00bfff" stroke-width="5.2" fill="none"/><path d="M0.00,9.30 A9.3,9.3 0 0 1 -2.52,8.95" stroke="#00ffff" stroke-width="5.2" fill="none"/><path d="M-2.41,8.98 A9.3,9.3 0 0 1 -4.76,7.99" stroke="#00ffbf" stroke-width="5.2" fill="none"/><path d="M-4.65,8.05 A9.3,9.3 0 0 1 -6.66,6.49" stroke="#00ff7f" stroke-width="5.2" fill="none"/><path d="M-6.58,6.58 A9.3,9.3 0 0 1 -8.11,4.54" stroke="#00ff3f" stroke-width="5.2" fill="none"/><path d="M-8.05,4.65 A9.3,9.3 0 0 1 -9.01,2.29" stroke="#00ff00" stroke-width="5.2" fill="none"/><path d="M-8.98,2.41 A9.3,9.3 0 0 1 -9.30,-0.12" stroke="#3fff00" stroke-width="5.2" fill="none"/><path d="M-9.30,0.00 A9.3,9.3 0 0 1 -8.95,-2.52" stroke="#7fff00" stroke-width="5.2" fill="none"/><path d="M-8.98,-2.41 A9.3,9.3 0 0 1 -7.99,-4.76" stroke="#bfff00" stroke-width="5.2" fill="none"/><path d="M-8.05,-4.65 A9.3,9.3 0 0 1 -6.49,-6.66" stroke="#fffe00" stroke-width="5.2" fill="none"/><path d="M-6.58,-6.58 A9.3,9.3 0 0 1 -4.54,-8.11" stroke="#ffbf00" stroke-width="5.2" fill="none"/><path d="M-4.65,-8.05 A9.3,9.3 0 0 1 -2.29,-9.01" stroke="#ff7f00" stroke-width="5.2" fill="none"/><path d="M-2.41,-8.98 A9.3,9.3 0 0 1 0.12,-9.30" stroke="#ff3f00" stroke-width="5.2" fill="none"/><circle cx="0" cy="0" r="12" fill="none" stroke="#222" stroke-width="1.1"/><circle cx="0" cy="0" r="6.5" fill="#fff" stroke="#333" stroke-width="0.7"/></g>
<path d="M889.0,177.5 V184.0 H882.5 Z" fill="#6e6e6e"/>
<g transform="translate(905.80,166.00)"><circle cx="0" cy="0" r="11.5" fill="url(#gSphere)" stroke="#111" stroke-width="1.8"/><ellipse cx="0" cy="0" rx="4.0" ry="11.5" fill="none" stroke="#111" stroke-width="1.3"/><path d="M-11.5,1 Q0,5.8 11.5,1" fill="none" stroke="#111" stroke-width="1.3"/></g>
<g transform="translate(940.80,166.00)"><path d="M-14,-14 V15 M-14,-14 H15" stroke="#9a9a9a" stroke-width="0.7" stroke-dasharray="1.2,1"/><path d="M-10,-14 V15 M-14,-10 H15" stroke="#9a9a9a" stroke-width="0.7" stroke-dasharray="1.2,1"/><path d="M-6,-14 V15 M-14,-6 H15" stroke="#9a9a9a" stroke-width="0.7" stroke-dasharray="1.2,1"/><path d="M-2,-14 V15 M-14,-2 H15" stroke="#9a9a9a" stroke-width="0.7" stroke-dasharray="1.2,1"/><path d="M2,-14 V15 M-14,2 H15" stroke="#9a9a9a" stroke-width="0.7" stroke-dasharray="1.2,1"/><path d="M6,-14 V15 M-14,6 H15" stroke="#9a9a9a" stroke-width="0.7" stroke-dasharray="1.2,1"/><path d="M10,-14 V15 M-14,10 H15" stroke="#9a9a9a" stroke-width="0.7" stroke-dasharray="1.2,1"/><path d="M14,-14 V15 M-14,14 H15" stroke="#9a9a9a" stroke-width="0.7" stroke-dasharray="1.2,1"/><circle cx="0" cy="0" r="11.5" fill="url(#gSphere)" stroke="#111" stroke-width="1.8"/><ellipse cx="0" cy="0" rx="4.0" ry="11.5" fill="none" stroke="#111" stroke-width="1.3"/><path d="M-11.5,1 Q0,5.8 11.5,1" fill="none" stroke="#111" stroke-width="1.3"/></g>
<path d="M958.8,177.5 V184.0 H952.3 Z" fill="#6e6e6e"/>
<g transform="translate(975.80,166.00)"><ellipse cx="1" cy="11" rx="11" ry="3" fill="#555" opacity="0.6"/><circle cx="0" cy="-1.5" r="11.5" fill="url(#gBSphere)" stroke="#0a1050" stroke-width="0.8"/><ellipse cx="-4" cy="-6" rx="3.5" ry="2" fill="#fff" opacity="0.85" transform="rotate(-35 -4 -6)"/></g>
<path d="M993.8,177.5 V184.0 H987.3 Z" fill="#6e6e6e"/>
<g transform="translate(1011.00,166.00)"><circle cx="-6" cy="3" r="9" fill="#fff" opacity="0.35"/><path d="M-8,-9 L9,-13.5 L5,2 Z" fill="#f59010" stroke="#333" stroke-width="1"/><ellipse cx="-1.5" cy="-3.5" rx="6" ry="3" fill="#fff5d0" stroke="#333" stroke-width="0.8" transform="rotate(45 -1.5 -3.5)"/></g>
<path d="M1029.0,177.5 V184.0 H1022.5 Z" fill="#6e6e6e"/>
<g transform="translate(1045.80,166.00)"><path d="M12.5,0.0 L8.3,3.4 L8.8,8.8 L3.4,8.3 L0.0,12.5 L-3.4,8.3 L-8.8,8.8 L-8.3,3.4 L-12.5,0.0 L-8.3,-3.4 L-8.8,-8.8 L-3.4,-8.3 L-0.0,-12.5 L3.4,-8.3 L8.8,-8.8 L8.3,-3.4Z" fill="#f0c040" stroke="#4a3000" stroke-width="1.6" stroke-linejoin="round"/><rect x="-3.5" y="-6" width="7" height="11" rx="3" fill="#aaa" stroke="#333" stroke-width="1"/></g>
<path d="M1063.8,177.5 V184.0 H1057.3 Z" fill="#6e6e6e"/>
<g transform="translate(1080.80,166.00)"><path d="M-13,-10 H5 M-13,0 H5 M-4,-8 V-2 M-6,-7 L-4,-9 L-2,-7 M-6,-3 L-4,-1 L-2,-3 M5,0 V14 M14,0 V12 M7,10 H12" stroke="#111" stroke-width="1.3" fill="none"/><rect x="4.20" y="-11.80" width="3.6" height="3.6" fill="#fff" stroke="#111" stroke-width="1.4"/><rect x="4.20" y="-1.80" width="3.6" height="3.6" fill="#fff" stroke="#111" stroke-width="1.4"/><rect x="12.20" y="-1.80" width="3.6" height="3.6" fill="#fff" stroke="#111" stroke-width="1.4"/></g>
<path d="M1098.8,177.5 V184.0 H1092.3 Z" fill="#6e6e6e"/>
<g transform="translate(1115.80,166.00)"><circle cx="0" cy="0" r="13" fill="url(#gGSphere)" stroke="#111" stroke-width="1.6"/><path d="M-10,6 Q-6,-2 -4,-4 L-2,2 L4,5 L10,8 L2,10 Q-5,11 -10,6 Z" fill="#111"/><path d="M-2,-12 L0,4 M3,-11 Q9,-6 11,0" stroke="#2a6a20" stroke-width="0.8" fill="none"/></g>
<path d="M1133.8,177.5 V184.0 H1127.3 Z" fill="#6e6e6e"/>
<g transform="translate(1150.80,166.00)"><circle cx="0" cy="0" r="12" fill="url(#gHelp)"/><text x="0" y="6.6" font-size="21.0" font-weight="bold" font-family="Liberation Serif" fill="#fff" text-anchor="middle">?</text></g>
<path d="M1168.8,177.5 V184.0 H1162.3 Z" fill="#6e6e6e"/>
<g transform="translate(18.10,222.50)"><path d="M-5,-11 L-5,7 L-1,3 L3,11 L6,9.5 L2,2 L7,2 Z" fill="#fff" stroke="#111" stroke-width="1.3" stroke-linejoin="round"/></g>
<g transform="translate(53.10,222.50)"><circle cx="0" cy="0" r="2.4" fill="#fff" stroke="#111" stroke-width="1.2"/></g>
<path d="M71.9,234.0 V240.5 H65.4 Z" fill="#6e6e6e"/>
<g transform="translate(88.80,222.50)"><path d="M-8,9 L-3,-7 L6,3" fill="none" stroke="#111" stroke-width="1.3"/><rect x="-10.10" y="6.90" width="4.2" height="4.2" fill="#fff" stroke="#111" stroke-width="1.4"/><rect x="-5.10" y="-9.10" width="4.2" height="4.2" fill="#fff" stroke="#111" stroke-width="1.4"/><rect x="3.90" y="0.90" width="4.2" height="4.2" fill="#fff" stroke="#111" stroke-width="1.4"/></g>
<path d="M107.6,234.0 V240.5 H101.1 Z" fill="#6e6e6e"/>
<g transform="translate(123.10,222.50)"><path d="M-8,-7 Q9,-10 9,1 Q9,9 -8,9" fill="none" stroke="#111" stroke-width="1.4"/><rect x="-10.10" y="-9.10" width="4.2" height="4.2" fill="#fff" stroke="#111" stroke-width="1.4"/><rect x="-10.10" y="6.90" width="4.2" height="4.2" fill="#fff" stroke="#111" stroke-width="1.4"/><rect x="6.90" y="-12.10" width="4.2" height="4.2" fill="#fff" stroke="#111" stroke-width="1.4"/><rect x="7.90" y="7.90" width="4.2" height="4.2" fill="#fff" stroke="#111" stroke-width="1.4"/></g>
<path d="M141.9,234.0 V240.5 H135.4 Z" fill="#6e6e6e"/>
<g transform="translate(18.10,257.60)"><circle cx="-1" cy="0" r="11" fill="none" stroke="#111" stroke-width="1.4"/><path d="M-1,0 L6,-7" stroke="#111" stroke-width="1"/><rect x="-3.10" y="-2.10" width="4.2" height="4.2" fill="#fff" stroke="#111" stroke-width="1.4"/><rect x="3.90" y="-9.10" width="4.2" height="4.2" fill="#fff" stroke="#111" stroke-width="1.4"/></g>
<path d="M36.9,269.1 V275.6 H30.4 Z" fill="#6e6e6e"/>
<g transform="translate(53.10,257.60)"><ellipse cx="0" cy="1" rx="12" ry="8" fill="none" stroke="#111" stroke-width="1.4"/><path d="M0,1 V-7 M0,1 H11" stroke="#111" stroke-width="0.9"/><rect x="-2.10" y="-9.10" width="4.2" height="4.2" fill="#fff" stroke="#111" stroke-width="1.4"/><rect x="-2.10" y="-0.10" width="4.2" height="4.2" fill="#fff" stroke="#111" stroke-width="1.4"/><rect x="8.90" y="-0.10" width="4.2" height="4.2" fill="#fff" stroke="#111" stroke-width="1.4"/></g>
<path d="M71.9,269.1 V275.6 H65.4 Z" fill="#6e6e6e"/>
<g transform="translate(88.80,257.60)"><path d="M-9,-10 Q5,-8 9,1 L-9,11 Z" fill="none" stroke="#111" stroke-width="0.9"/><path d="M-9,-10 Q5,-8 9,1" fill="none" stroke="#111" stroke-width="1.4"/><rect x="-11.10" y="-12.10" width="4.2" height="4.2" fill="#fff" stroke="#111" stroke-width="1.4"/><rect x="6.90" y="-1.10" width="4.2" height="4.2" fill="#fff" stroke="#111" stroke-width="1.4"/><rect x="-11.10" y="8.90" width="4.2" height="4.2" fill="#fff" stroke="#111" stroke-width="1.4"/></g>
<path d="M107.6,269.1 V275.6 H101.1 Z" fill="#6e6e6e"/>
<g transform="translate(123.10,257.60)"><rect x="-10" y="-7" width="21" height="13" fill="none" stroke="#111" stroke-width="1.6"/><rect x="8.90" y="-9.10" width="4.2" height="4.2" fill="#fff" stroke="#111" stroke-width="1.4"/><rect x="-12.10" y="3.90" width="4.2" height="4.2" fill="#fff" stroke="#111" stroke-width="1.4"/></g>
<path d="M141.9,269.1 V275.6 H135.4 Z" fill="#6e6e6e"/>
<g transform="translate(18.10,292.70)"><path d="M-10,0 L-5,-9 H5 L10,0 L5,9 H-5 Z" fill="none" stroke="#111" stroke-width="1.2"/><path d="M-1,0 H9" stroke="#111" stroke-width="0.9"/><rect x="-3.10" y="-2.10" width="4.2" height="4.2" fill="#fff" stroke="#111" stroke-width="1.4"/><rect x="6.90" y="-2.10" width="4.2" height="4.2" fill="#fff" stroke="#111" stroke-width="1.4"/></g>
<path d="M36.9,304.2 V310.7 H30.4 Z" fill="#6e6e6e"/>
<g transform="translate(53.10,292.70)"><path d="M-10,-9 H8 V9" fill="none" stroke="#888" stroke-width="0.9"/><path d="M-10,-9 Q8,-9 8,10" fill="none" stroke="#111" stroke-width="2.2"/><rect x="-12.10" y="-11.10" width="4.2" height="4.2" fill="#fff" stroke="#111" stroke-width="1.4"/><rect x="5.90" y="7.90" width="4.2" height="4.2" fill="#fff" stroke="#111" stroke-width="1.4"/></g>
<path d="M71.9,304.2 V310.7 H65.4 Z" fill="#6e6e6e"/>
<g transform="translate(88.80,292.70)"><path d="M-6,-9 L9,-9 L7,7 L-1,10 L-9,4 Z" fill="url(#gBlue)" stroke="#111" stroke-width="1.3"/><path d="M-8,-1 L8,1 M1,-9 L-3,8" stroke="#111" stroke-width="0.8"/><rect x="-8.10" y="-11.10" width="4.2" height="4.2" fill="#fff" stroke="#111" stroke-width="1.4"/><rect x="6.90" y="-11.10" width="4.2" height="4.2" fill="#fff" stroke="#111" stroke-width="1.4"/><rect x="-12.10" y="1.90" width="4.2" height="4.2" fill="#fff" stroke="#111" stroke-width="1.4"/><rect x="1.90" y="7.90" width="4.2" height="4.2" fill="#fff" stroke="#111" stroke-width="1.4"/></g>
<path d="M107.6,304.2 V310.7 H101.1 Z" fill="#6e6e6e"/>
<g transform="translate(123.10,292.70)"><path d="M-10,-5 Q-2,-10 2,-11 Q10,-9 10,-3 V7 L2,12 V2 Q1,-4 -10,-5 Z" fill="url(#gBlue)" stroke="#111" stroke-width="1.3"/><path d="M-10,-5 L-4,-9 L4,-8 L2,-1 Z" fill="#fff"/><path d="M2,4 L10,0 V7 L2,12 Z" fill="#fff" stroke="#111" stroke-width="1"/></g>
<path d="M141.9,304.2 V310.7 H135.4 Z" fill="#6e6e6e"/>
<g transform="translate(18.10,327.80)"><path d="M-10,-5 L0,-11 L10,-6 V6 L1,12 L-10,7 Z" fill="#5a78f0" stroke="#111" stroke-width="1.3"/><path d="M-10,-5 L0,-11 L10,-6 L1,-1 Z" fill="#c0ccff"/><path d="M1,-1 L10,-6 V6 L1,12 Z" fill="#3a50c0"/><path d="M-10,-5 L0,-11 L10,-6 V6 L1,12 L-10,7 Z M-10,-5 L1,-1 V12 M1,-1 L10,-6" fill="none" stroke="#111" stroke-width="1.2"/></g>
<path d="M36.9,339.3 V345.8 H30.4 Z" fill="#6e6e6e"/>
<g transform="translate(53.10,327.80)"><circle cx="4" cy="-5" r="7.5" fill="url(#gBlue)" stroke="#111" stroke-width="1.2"/><circle cx="-5" cy="4" r="7.5" fill="url(#gBlue)" stroke="#111" stroke-width="1.2"/><path d="M-12.5,4 Q-5,8 2.5,4 M-5,-3.5 Q-8,4 -5,11.5 M-3.5,-5 Q4,-1 11.5,-5 M4,-12.5 Q1,-5 4,2.5" fill="none" stroke="#111" stroke-width="0.8"/></g>
<path d="M71.9,339.3 V345.8 H65.4 Z" fill="#6e6e6e"/>
<g transform="translate(88.80,327.80)"><ellipse cx="0" cy="-10" rx="6" ry="2.3" fill="none" stroke="#111" stroke-width="1.2"/><path d="M-12,-2 Q0,2 12,-2 V10 Q0,15 -12,10 Z" fill="#5a78f0" stroke="#111" stroke-width="1.2"/><ellipse cx="0" cy="8" rx="6.5" ry="2.8" fill="none" stroke="#fff" stroke-width="2"/></g>
<path d="M107.6,339.3 V345.8 H101.1 Z" fill="#6e6e6e"/>
<g transform="translate(123.10,327.80)"><path d="M-4,-10 L11,-6 Q6,4 8,11 L-7,7 L-12,6 Q-6,0 -4,-10 Z" fill="url(#gBlue)" stroke="#111" stroke-width="1.2"/><path d="M-8,-1 L10,3 M0,-9 L-1,8 M4,-8 Q2,0 3,9 M-4,-10 L8,11 M-12,6 L11,-6" stroke="#223" stroke-width="0.6" fill="none"/></g>
<path d="M141.9,339.3 V345.8 H135.4 Z" fill="#6e6e6e"/>
<g transform="translate(18.10,362.90)"><path d="M-12,-5 L-6,-12 L-3,-9 Q-1,-12 1,-10 L-1,-7 L3,-3 L-4,4 L-8,0 Q-10,2 -12,0 Z" fill="#f8a810" stroke="#111" stroke-width="1.1"/><path d="M-3,-3 L4,-10 L8,-6 Q11,-7 11,-4 L9,-2 L12,1 L5,8 L2,5 Q0,8 -2,6 L0,3 Z" fill="#fff" stroke="#111" stroke-width="1.1" transform="translate(0,4)"/></g>
<path d="M36.9,374.4 V380.9 H30.4 Z" fill="#6e6e6e"/>
<g transform="translate(53.10,362.90)"><path d="M-10,12 L-11,-2 L-7,-7 L-5,1 L6,-12 L-1,5 L12,4 L-1,9 Z" fill="url(#gOrange)" stroke="#111" stroke-width="1.1" stroke-linejoin="round"/></g>
<g transform="translate(88.80,362.90)"><rect x="-12" y="-3" width="13" height="6" fill="#fff" stroke="#111" stroke-width="1.3"/><path d="M1,-13 H7 L1,3 Z" fill="#1a2a80"/><path d="M1,3 L5,0 L12,7 L8,11 Z" fill="#fff" stroke="#111" stroke-width="1.3"/></g>
<g transform="translate(123.10,362.90)"><rect x="-12" y="1" width="24" height="6" fill="#fff" stroke="#111" stroke-width="1.3"/><path d="M1,-13 H8 L1,6 Z" fill="#1a2a80"/></g>
<g transform="translate(18.10,398.00)"><circle cx="0" cy="-5" r="6.5" fill="#5a78f0" stroke="#111" stroke-width="2.6"/><circle cx="-5" cy="3" r="6.5" fill="#fff" stroke="#111" stroke-width="2.6"/><circle cx="5" cy="3" r="6.5" fill="#1a2a80" stroke="#111" stroke-width="2.6"/><circle cx="0" cy="-5" r="5" fill="#5a78f0"/><circle cx="-5" cy="3" r="5" fill="#fff"/><circle cx="5" cy="3" r="5" fill="#1a2a80"/></g>
<path d="M36.9,409.5 V416.0 H30.4 Z" fill="#6e6e6e"/>
<g transform="translate(53.10,398.00)"><circle cx="0" cy="-5" r="4.5" fill="#5a78f0" stroke="#111" stroke-width="1"/><circle cx="-6" cy="4" r="4.5" fill="#fff" stroke="#111" stroke-width="1"/><circle cx="6" cy="4" r="4.5" fill="#1a2a80" stroke="#111" stroke-width="1"/></g>
<g transform="translate(88.80,398.00)"><path d="M-12,-7 L-6,-8 Q4,-6 6,6 L5,12" fill="none" stroke="#111" stroke-width="1.8"/><rect x="-8.10" y="-10.10" width="4.2" height="4.2" fill="#fff" stroke="#111" stroke-width="1.4"/><rect x="3.90" y="2.90" width="4.2" height="4.2" fill="#fff" stroke="#111" stroke-width="1.4"/></g>
<g transform="translate(123.10,398.00)"><path d="M-10,-5 Q7,-5 10,12" fill="none" stroke="#111" stroke-width="2.2"/><path d="M-11,-10 H-4 M-4,-10 Q9,-9 13,2 V12" fill="none" stroke="#111" stroke-width="1" stroke-dasharray="1.5,1.3"/><rect x="-5.10" y="-13.10" width="4.2" height="4.2" fill="#fff" stroke="#111" stroke-width="1.4"/><rect x="9.90" y="0.90" width="4.2" height="4.2" fill="#fff" stroke="#111" stroke-width="1.4"/></g>
<path d="M141.9,409.5 V416.0 H135.4 Z" fill="#6e6e6e"/>
<g transform="translate(18.10,433.10)"><path d="M-11,-11 L10,-8 V-2 L7,-3 L5,-5 L2,-5 L-1,9 L2,11 L-5,11 L-8,9 L-5,9 L-2,-5 L-6,-6 L-8,-4 L-11,-5 Z" fill="#5a78f0" stroke="#111" stroke-width="1.1" stroke-linejoin="round"/></g>
<g transform="translate(53.10,433.10)"><rect x="-10" y="2" width="7" height="7" fill="url(#gWhite)" stroke="#111" stroke-width="1.2"/><rect x="4" y="-11" width="7" height="7" fill="url(#gBlue)" stroke="#111" stroke-width="1.2"/><path d="M-3,2 L4,-4 M1,-4 H4 V-1" fill="none" stroke="#111" stroke-width="1.1"/></g>
<path d="M71.9,444.6 V451.1 H65.4 Z" fill="#6e6e6e"/>
<g transform="translate(88.80,433.10)"><rect x="-11" y="-11" width="6.5" height="6.5" fill="url(#gBlue)" stroke="#111" stroke-width="1"/><rect x="-11" y="3" width="6.5" height="6.5" fill="url(#gWhite)" stroke="#111" stroke-width="1"/><rect x="1" y="-8" width="6.5" height="6.5" fill="url(#gBlue)" stroke="#111" stroke-width="1"/><rect x="-3" y="-5" width="6.5" height="6.5" fill="url(#gBlue)" stroke="#111" stroke-width="1"/><rect x="4" y="4" width="6.5" height="6.5" fill="url(#gBlue)" stroke="#111" stroke-width="1"/></g>
<g transform="translate(123.10,433.10)"><rect x="-12" y="-12" width="6.5" height="17" fill="url(#gWhite)" stroke="#111" stroke-width="1.1"/><path d="M-3,10 L9,-2 L13,2 L1,14 Z" fill="url(#gBlue)" stroke="#111" stroke-width="1.1" transform="translate(-1,-3)"/><path d="M-5,-9 Q4,-11 7,-5 M5,-7 L7,-4 L9,-7" fill="none" stroke="#111" stroke-width="1"/></g>
<g transform="translate(18.10,468.20)"><path d="M-11,-6 L-1,-11 L9,-7 V5 L-1,11 L-11,5 Z" fill="#5a78f0" stroke="#111" stroke-width="1.3"/><path d="M-11,-6 L-1,-11 L9,-7 L-1,-2 Z" fill="#c0ccff"/><path d="M-5,3 L3,-1 V11 L-5,12 Z" fill="#fff" stroke="#111" stroke-width="1"/><path d="M-11,-6 L-1,-11 L9,-7 V5 L-1,11 L-11,5 Z" fill="none" stroke="#111" stroke-width="1.3"/></g>
<path d="M36.9,479.7 V486.2 H30.4 Z" fill="#6e6e6e"/>
<g transform="translate(53.10,468.20)"><path d="M-12,9 L-6,4 H12 L6,9 Z" fill="#5a78f0" stroke="#111" stroke-width="0.9"/><path d="M-5,6 V-7 M1,6 V-7 M7,6 V-7" stroke="#999" stroke-width="2"/><path d="M-8,-5 L-5,-10 L-2,-5 Z M-2,-5 L1,-10 L4,-5 Z M4,-5 L7,-10 L10,-5 Z" fill="#999"/></g>
<path d="M71.9,479.7 V486.2 H65.4 Z" fill="#6e6e6e"/>
<g transform="translate(88.80,468.20)"><rect x="-10.0" y="-10.0" width="5" height="5" fill="#8aa0ff" stroke="#111" stroke-width="1"/><rect x="-1.5" y="-10.0" width="5" height="5" fill="#8aa0ff" stroke="#111" stroke-width="1"/><rect x="7.0" y="-10.0" width="5" height="5" fill="#8aa0ff" stroke="#111" stroke-width="1"/><rect x="-10.0" y="-1.5" width="5" height="5" fill="#8aa0ff" stroke="#111" stroke-width="1"/><rect x="-1.5" y="-1.5" width="5" height="5" fill="#8aa0ff" stroke="#111" stroke-width="1"/><rect x="7.0" y="-1.5" width="5" height="5" fill="#8aa0ff" stroke="#111" stroke-width="1"/><rect x="-10.0" y="7.0" width="5" height="5" fill="#fff" stroke="#111" stroke-width="1"/><rect x="-1.5" y="7.0" width="5" height="5" fill="#8aa0ff" stroke="#111" stroke-width="1"/><rect x="7.0" y="7.0" width="5" height="5" fill="#8aa0ff" stroke="#111" stroke-width="1"/></g>
<path d="M107.6,479.7 V486.2 H101.1 Z" fill="#6e6e6e"/>
<g transform="translate(123.10,468.20)"><rect x="-6" y="-10" width="11" height="5" fill="#eee" stroke="#111" stroke-width="1.2"/><rect x="-4" y="-3" width="7" height="5" fill="#eee" stroke="#111" stroke-width="1.2"/><rect x="-5" y="4" width="9" height="6" fill="#eee" stroke="#111" stroke-width="1.2"/><path d="M-0.5,-12 V13" stroke="#e02020" stroke-width="1.6"/></g>
<path d="M141.9,479.7 V486.2 H135.4 Z" fill="#6e6e6e"/>
<g transform="translate(18.10,503.30)"><path d="M-10,-6 L-5,-9 L-1,-7 V8 L-7,12 L-11,9 Z" fill="#f4f4f4" stroke="#111" stroke-width="1.2"/><path d="M-1,-10 L4,-11 L8,-8 L-1,12 L-6,10 Z" fill="#5a78f0" stroke="#111" stroke-width="1.2"/></g>
<path d="M36.9,514.8 V521.3 H30.4 Z" fill="#6e6e6e"/>
<g transform="translate(53.10,503.30)"><rect x="-2" y="-13" width="4" height="26" fill="#8aa0ff" stroke="#111" stroke-width="1"/><circle cx="-9" cy="-6" r="2.4" fill="#111"/><circle cx="8" cy="-6" r="2.4" fill="#111"/><path d="M-10,-3 L-9,3 L-4,5 L-5,10 M2,-3 L8,-3 L10,2 L8,5 L12,10" stroke="#111" stroke-width="2" fill="none"/></g>
<path d="M71.9,514.8 V521.3 H65.4 Z" fill="#6e6e6e"/>
<g transform="translate(88.80,503.30)"><path d="M-10,1 L-7,-1 L-3,5 L9,-11 L11,-10 L-3,11 Z" fill="#000"/></g>
<path d="M107.6,514.8 V521.3 H101.1 Z" fill="#6e6e6e"/>
<g transform="translate(123.10,503.30)"><path d="M-11,-4 L-4,-9 L3,-7 V3 L-4,8 L-11,4 Z" fill="#ddd" stroke="#111" stroke-width="1.1"/><path d="M-11,-4 L-4,-9 L3,-7 L-4,-2 Z" fill="#f4f4f4"/><path d="M-4,-2 L3,-7 V3 L-4,8 Z" fill="#888"/><path d="M-11,-4 L-4,-9 L3,-7 V3 L-4,8 L-11,4 Z" fill="none" stroke="#111" stroke-width="1.1"/><path d="M6,-9 L12,6 Q6,11 0,6 Z" fill="url(#gGray)" stroke="#111" stroke-width="1.1"/></g>
<path d="M141.9,514.8 V521.3 H135.4 Z" fill="#6e6e6e"/>
<g transform="translate(18.10,538.40)"><path d="M-6,-12 L-1,-14 H5 V-9 H2 L-3,-6 Z" fill="#fff" stroke="#111" stroke-width="0.9"/><path d="M-11,8 L-1,-4 L10,5 L1,12 Z" fill="#f2d060" stroke="#111" stroke-width="1.2"/><path d="M-1,-4 L1,12 L10,5 Z" fill="#c8a030"/><path d="M-11,8 L-1,-4 L10,5 L1,12 Z" fill="none" stroke="#111" stroke-width="1.2"/></g>
<path d="M36.9,549.9 V556.4 H30.4 Z" fill="#6e6e6e"/>
<g transform="translate(1626.00,238.00)"><g transform="scale(0.62)"><path d="M-12,-11 L11,-6 L12,4 L-2,12 L-12,-1 Z" fill="#fff"/><path d="M-12,-11 L11,-6 L11,-2 L-2,3 L-12,-6 Z" fill="#ff8a5c"/><path d="M-2,3 L11,-2 V1.5 L-2,7 Z" fill="#e02818"/><path d="M-12,-1 L-2,9.5 L12,2.5 V4 L-2,12 Z" fill="#2838b0"/><path d="M-12,-11 L11,-6 L12,4 L-2,12 L-12,-1 Z" fill="none" stroke="#111" stroke-width="1.5" stroke-linejoin="round"/></g><path d="M4,1 V9 M0,5 H8" stroke="#000" stroke-width="2.2"/></g>
<g transform="translate(1652.00,235.00)"><g transform="scale(0.5)"><path d="M-12,-11 L11,-6 L12,4 L-2,12 L-12,-1 Z" fill="#fff"/><path d="M-12,-11 L11,-6 L11,-2 L-2,3 L-12,-6 Z" fill="#ff8a5c"/><path d="M-2,3 L11,-2 V1.5 L-2,7 Z" fill="#e02818"/><path d="M-12,-1 L-2,9.5 L12,2.5 V4 L-2,12 Z" fill="#2838b0"/><path d="M-12,-11 L11,-6 L12,4 L-2,12 L-12,-1 Z" fill="none" stroke="#111" stroke-width="1.5" stroke-linejoin="round"/></g></g><g transform="translate(1658.00,242.00)"><g transform="scale(0.5)"><path d="M-12,-11 L11,-6 L12,4 L-2,12 L-12,-1 Z" fill="#fff"/><path d="M-12,-11 L11,-6 L11,-2 L-2,3 L-12,-6 Z" fill="#ff8a5c"/><path d="M-2,3 L11,-2 V1.5 L-2,7 Z" fill="#e02818"/><path d="M-12,-1 L-2,9.5 L12,2.5 V4 L-2,12 Z" fill="#2838b0"/><path d="M-12,-11 L11,-6 L12,4 L-2,12 L-12,-1 Z" fill="none" stroke="#111" stroke-width="1.5" stroke-linejoin="round"/></g></g><path d="M1645,236 V245 H1651 M1649,243 L1651,245 L1649,247" stroke="#111" stroke-width="1.2" fill="none"/>
<path d="M1674.5,231.5 L1689.5,246.5 M1689.5,231.5 L1674.5,246.5" stroke="#c4c4c4" stroke-width="2.4"/>
<path d="M1702,238 Q1700,232 1706,231 L1712,233 L1716,240 Q1716,246 1710,247 H1704 Q1700,245 1702,238 Z" fill="none" stroke="#c4c4c4" stroke-width="1.4"/><path d="M1703,240 L1713,236 L1716,242" fill="#ddd" stroke="#c4c4c4" stroke-width="1"/>
<path d="M1729,242 L1737,234 L1745,242 Z" fill="#c8c8c8" stroke="#aaa" stroke-width="0.8"/>
<path d="M1757,235 H1773 L1765,243 Z" fill="#c8c8c8" stroke="#aaa" stroke-width="0.8"/>
<path d="M1795,231 V247 L1786,239 Z" fill="#c8c8c8" stroke="#aaa" stroke-width="0.8"/>
<path d="M1811,231 Q1819,229 1827,231 L1821,240 V248 H1817 V240 Z" fill="#4a6ad8" stroke="#1a2a80" stroke-width="1"/><ellipse cx="1819" cy="231.5" rx="8" ry="2" fill="#8aa8ff" stroke="#1a2a80" stroke-width="0.8"/>
<rect x="1839.5" y="231" width="14.5" height="17" fill="#fff" stroke="#333" stroke-width="1.2"/><path d="M1839.5,235 H1854 M1839.5,239.5 H1854 M1839.5,244 H1854 M1844.5,231 V248 M1849,231 V248" stroke="#333" stroke-width="1"/><rect x="1839.5" y="231" width="14.5" height="2.5" fill="#333"/>
<path d="M1867.5,233 H1882.5 M1867.5,239 H1882.5 M1867.5,245 H1882.5" stroke="#000" stroke-width="2.6" stroke-linecap="round"/>
<g transform="translate(1905.00,239.00)"><g transform="scale(0.62)"><path d="M-12,-11 L11,-6 L12,4 L-2,12 L-12,-1 Z" fill="#fff"/><path d="M-12,-11 L11,-6 L11,-2 L-2,3 L-12,-6 Z" fill="#ff8a5c"/><path d="M-2,3 L11,-2 V1.5 L-2,7 Z" fill="#e02818"/><path d="M-12,-1 L-2,9.5 L12,2.5 V4 L-2,12 Z" fill="#2838b0"/><path d="M-12,-11 L11,-6 L12,4 L-2,12 L-12,-1 Z" fill="none" stroke="#111" stroke-width="1.5" stroke-linejoin="round"/></g></g>
<g transform="translate(1627.00,266.80)"><circle cx="0" cy="0" r="9" fill="url(#gHelp)"/><text x="0" y="5.0" font-size="15.8" font-weight="bold" font-family="Liberation Serif" fill="#fff" text-anchor="middle">?</text></g>
<g transform="translate(1905.30,284.60)"><g transform="scale(0.68)"><path d="M0.00,-9.30 A9.3,9.3 0 0 1 2.52,-8.95" stroke="#ff0000" stroke-width="5.2" fill="none"/><path d="M2.41,-8.98 A9.3,9.3 0 0 1 4.76,-7.99" stroke="#ff003f" stroke-width="5.2" fill="none"/><path d="M4.65,-8.05 A9.3,9.3 0 0 1 6.66,-6.49" stroke="#ff007f" stroke-width="5.2" fill="none"/><path d="M6.58,-6.58 A9.3,9.3 0 0 1 8.11,-4.54" stroke="#ff00bf" stroke-width="5.2" fill="none"/><path d="M8.05,-4.65 A9.3,9.3 0 0 1 9.01,-2.29" stroke="#ff00ff" stroke-width="5.2" fill="none"/><path d="M8.98,-2.41 A9.3,9.3 0 0 1 9.30,0.12" stroke="#bf00ff" stroke-width="5.2" fill="none"/><path d="M9.30,0.00 A9.3,9.3 0 0 1 8.95,2.52" stroke="#7f00ff" stroke-width="5.2" fill="none"/><path d="M8.98,2.41 A9.3,9.3 0 0 1 7.99,4.76" stroke="#3f00ff" stroke-width="5.2" fill="none"/><path d="M8.05,4.65 A9.3,9.3 0 0 1 6.49,6.66" stroke="#0000ff" stroke-width="5.2" fill="none"/><path d="M6.58,6.58 A9.3,9.3 0 0 1 4.54,8.11" stroke="#003fff" stroke-width="5.2" fill="none"/><path d="M4.65,8.05 A9.3,9.3 0 0 1 2.29,9.01" stroke="#007fff" stroke-width="5.2" fill="none"/><path d="M2.41,8.98 A9.3,9.3 0 0 1 -0.12,9.30" stroke="#00bfff" stroke-width="5.2" fill="none"/><path d="M0.00,9.30 A9.3,9.3 0 0 1 -2.52,8.95" stroke="#00ffff" stroke-width="5.2" fill="none"/><path d="M-2.41,8.98 A9.3,9.3 0 0 1 -4.76,7.99" stroke="#00ffbf" stroke-width="5.2" fill="none"/><path d="M-4.65,8.05 A9.3,9.3 0 0 1 -6.66,6.49" stroke="#00ff7f" stroke-width="5.2" fill="none"/><path d="M-6.58,6.58 A9.3,9.3 0 0 1 -8.11,4.54" stroke="#00ff3f" stroke-width="5.2" fill="none"/><path d="M-8.05,4.65 A9.3,9.3 0 0 1 -9.01,2.29" stroke="#00ff00" stroke-width="5.2" fill="none"/><path d="M-8.98,2.41 A9.3,9.3 0 0 1 -9.30,-0.12" stroke="#3fff00" stroke-width="5.2" fill="none"/><path d="M-9.30,0.00 A9.3,9.3 0 0 1 -8.95,-2.52" stroke="#7fff00" stroke-width="5.2" fill="none"/><path d="M-8.98,-2.41 A9.3,9.3 0 0 1 -7.99,-4.76" stroke="#bfff00" stroke-width="5.2" fill="none"/><path d="M-8.05,-4.65 A9.3,9.3 0 0 1 -6.49,-6.66" stroke="#fffe00" stroke-width="5.2" fill="none"/><path d="M-6.58,-6.58 A9.3,9.3 0 0 1 -4.54,-8.11" stroke="#ffbf00" stroke-width="5.2" fill="none"/><path d="M-4.65,-8.05 A9.3,9.3 0 0 1 -2.29,-9.01" stroke="#ff7f00" stroke-width="5.2" fill="none"/><path d="M-2.41,-8.98 A9.3,9.3 0 0 1 0.12,-9.30" stroke="#ff3f00" stroke-width="5.2" fill="none"/><circle cx="0" cy="0" r="12" fill="none" stroke="#222" stroke-width="1.1"/><circle cx="0" cy="0" r="6.5" fill="#fff" stroke="#333" stroke-width="0.7"/></g></g>
<rect x="1896" y="322" width="18" height="13" fill="url(#gMon)" stroke="#111" stroke-width="1.6"/><rect x="1902" y="336" width="6" height="2" fill="#111"/>
<rect x="1896" y="366" width="18" height="16" fill="#fff" stroke="#333" stroke-width="1"/><rect x="1896" y="366" width="18" height="2" fill="#2a3a9a"/><circle cx="1905" cy="375.5" r="5.5" fill="#3a52d0"/><text x="1905" y="379" font-size="9" font-weight="bold" fill="#fff" text-anchor="middle" font-family="Liberation Serif">?</text>
<circle cx="22.7" cy="630.7" r="8.5" fill="none" stroke="#444" stroke-width="1"/><rect x="20.3" y="629.3" width="3.2" height="3" fill="#fff" stroke="#111" stroke-width="1"/><path d="M23.5,630.8 H31" stroke="#111" stroke-width="1"/>
<path d="M62,624 Q69,622 76,624 L71,631 V637 H67 V631 Z" fill="url(#gGray)" stroke="#333" stroke-width="0.9"/><path d="M76,623 H78 V625 M60,636 V638 H62" fill="none" stroke="#222" stroke-width="1"/>
<path d="M1911.10,137.00 L1908.76,138.93 L1909.05,141.95 L1906.03,141.66 L1904.10,144.00 L1902.17,141.66 L1899.15,141.95 L1899.44,138.93 L1897.10,137.00 L1899.44,135.07 L1899.15,132.05 L1902.17,132.34 L1904.10,130.00 L1906.03,132.34 L1909.05,132.05 L1908.76,135.07Z" fill="#c9c9c9"/><circle cx="1904.1" cy="137" r="2.24" fill="#e9eaee"/>
<path d="M142.50,606.80 L140.16,608.73 L140.45,611.75 L137.43,611.46 L135.50,613.80 L133.57,611.46 L130.55,611.75 L130.84,608.73 L128.50,606.80 L130.84,604.87 L130.55,601.85 L133.57,602.14 L135.50,599.80 L137.43,602.14 L140.45,601.85 L140.16,604.87Z" fill="#cfcfcf"/><circle cx="135.5" cy="606.8" r="2.24" fill="#e9eaee"/>
<path d="M1911.50,206.00 L1909.16,207.93 L1909.45,210.95 L1906.43,210.66 L1904.50,213.00 L1902.57,210.66 L1899.55,210.95 L1899.84,207.93 L1897.50,206.00 L1899.84,204.07 L1899.55,201.05 L1902.57,201.34 L1904.50,199.00 L1906.43,201.34 L1909.45,201.05 L1909.16,204.07Z" fill="#cfcfcf"/><circle cx="1904.5" cy="206" r="2.24" fill="#e9eaee"/>
<g transform="translate(2,4) scale(1.0)"><rect x="0" y="0" width="20" height="20" fill="#000"/><path d="M0,0 H3.2 Q2.2,5 2.3,8 Q1.5,9.5 0,10.5 Z" fill="#f4f4f4"/><path d="M5,1 Q8,1 9,5 Q10,8.5 13,10 L19.5,11.5 L16,15 Q14,19 12.5,19.5 L3,13 Q1.5,11 3.5,9 Q6,6.5 5,1 Z" fill="#f4f4f4"/><path d="M4.5,11.5 L10,15.5 M6,9.5 L9,11" stroke="#333" stroke-width="1.2"/><path d="M16,2.5 Q18.5,2.5 18.5,4.5 Q18.5,6 16.5,6.2 Q19,6.5 19,8.5 Q19,10.5 16.5,10.5 Q14.5,10.5 14.5,8.5 Q14.5,6.5 16.5,6.2 Q14.8,6 14.8,4.5 Q14.8,2.5 16,2.5 Z" fill="none" stroke="#bbb" stroke-width="1"/></g>
</svg></body></html>
